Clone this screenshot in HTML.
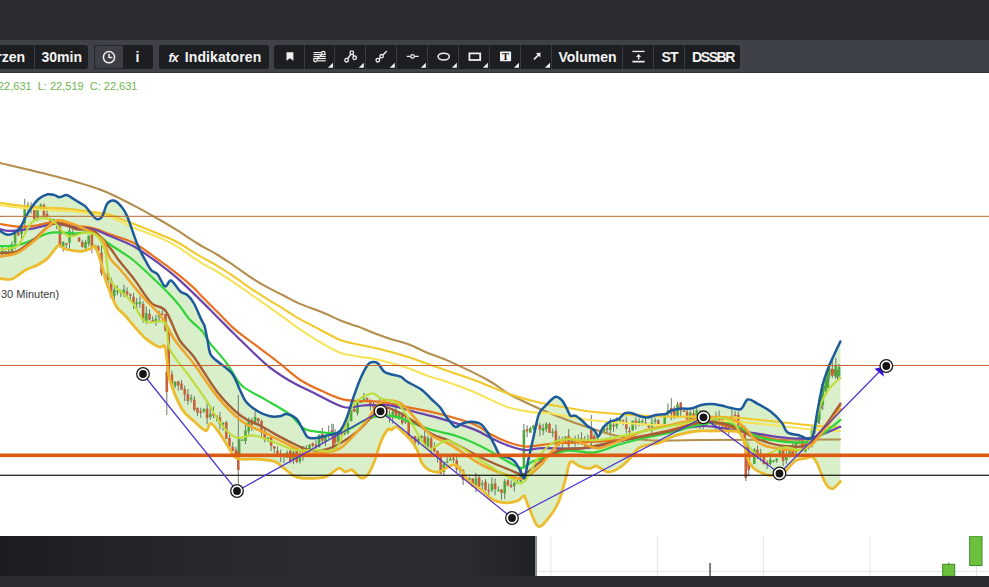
<!DOCTYPE html>
<html><head><meta charset="utf-8">
<style>
html,body{margin:0;padding:0;width:989px;height:587px;overflow:hidden;background:#fff;font-family:"Liberation Sans",sans-serif;}
#top{position:absolute;left:0;top:0;width:989px;height:40px;background:#2a2c31;}
#tb{position:absolute;left:0;top:40px;width:989px;height:32px;background:#3e4147;border-bottom:1px solid #303237;}
.g{position:absolute;top:45px;height:24px;background:#1c1e22;border-radius:3px;}
.b{position:absolute;top:45px;height:24px;color:#f4f4f4;font-weight:bold;font-size:14px;line-height:24.5px;white-space:nowrap;}
.sep{position:absolute;top:45px;width:1px;height:24px;background:#393b40;}
#chart{position:absolute;left:0;top:73px;width:989px;height:463px;background:#fff;overflow:hidden;}
#bot{position:absolute;left:0;top:536px;width:535px;height:40px;background:linear-gradient(90deg,#1c1d21 0%,#232529 25%,#2a2c31 55%,#2b2d32 85%,#1f2125 100%);}
#botline{position:absolute;left:535px;top:536px;width:1.5px;height:40px;background:#8a8a8a;}
#botr{position:absolute;left:536.5px;top:536px;width:453px;height:40px;background:#fff;}
#foot{position:absolute;left:0;top:575.7px;width:989px;height:12px;background:#2a2c31;}
</style></head><body>
<div id="top"></div>
<div id="tb"></div>
<div class="g" style="left:-4px;width:92px;"></div>
<div class="g" style="left:93.5px;width:59.5px;"></div>
<div style="position:absolute;left:93.5px;top:45px;width:28.5px;height:22px;background:#3c3f45;border:1px solid #25272b;border-right:none;border-radius:3px 0 0 3px;"></div>
<div class="g" style="left:158.5px;width:110px;"></div>
<div class="g" style="left:274.4px;width:465.6px;"></div>
<div class="sep" style="left:34px"></div>
<div class="sep" style="left:304px"></div>
<div class="sep" style="left:334.2px"></div>
<div class="sep" style="left:365px"></div>
<div class="sep" style="left:396px"></div>
<div class="sep" style="left:427px"></div>
<div class="sep" style="left:458px"></div>
<div class="sep" style="left:489px"></div>
<div class="sep" style="left:520px"></div>
<div class="sep" style="left:551px"></div>
<div class="sep" style="left:622px"></div>
<div class="sep" style="left:653.2px"></div>
<div class="sep" style="left:684px"></div>
<div class="b" style="left:-6px;width:31px;text-align:right;">rzen</div>
<div class="b" style="left:41.5px;">30min</div>
<div class="b" style="left:135.5px;">i</div>
<div class="b" style="left:184.8px;letter-spacing:0.1px;">Indikatoren</div>
<div class="b" style="left:558.5px;letter-spacing:0px;">Volumen</div>
<div class="b" style="left:661.5px;letter-spacing:-0.8px;">ST</div>
<div class="b" style="left:692px;letter-spacing:-1.4px;">DSSBR</div>
<svg style="position:absolute;left:0;top:0" width="989" height="74">
 <g fill="none" stroke="#eeeeee" stroke-width="1.5">
  <circle cx="109" cy="57.2" r="5.6"/>
  <path d="M109 53.8V57.6H112.4"/>
 </g>
 <text x="168.5" y="61.8" fill="#f4f4f4" font-family="Liberation Sans" font-style="italic" font-weight="bold" font-size="12.5" letter-spacing="-1">fx</text>
 <path d="M286.5 52.2H293.4V60.7L290 58.2L286.5 60.7Z" fill="#f0f0f0"/>
 <g stroke="#eeeeee" stroke-width="1.3" fill="none">
  </g><g fill="#eeeeee"><rect x="313.5" y="52" width="8" height="1.1"/><rect x="313.5" y="54" width="12.3" height="1.1"/><rect x="313.5" y="56" width="12.3" height="1.1"/><rect x="313.5" y="58" width="12.3" height="1.1"/><rect x="318" y="60.2" width="7.8" height="1.2"/></g><g stroke="#eeeeee" stroke-width="1.3" fill="none">
  <path d="M316.6 59.0L322.2 54.2" stroke-width="1.2"/>
  <circle cx="323.3" cy="53.1" r="1.7" fill="#1c1e22"/>
  <circle cx="315.5" cy="60.1" r="1.8" fill="#1c1e22"/>
  <path d="M347.4 59L351 54M352.6 54L354 56.3"/>
  <circle cx="346.6" cy="60.2" r="1.8" fill="#1c1e22"/>
  <circle cx="351.8" cy="52.7" r="1.8" fill="#1c1e22"/>
  <circle cx="354.7" cy="57.8" r="1.8" fill="#1c1e22"/>
  <path d="M378.8 59.2L380.3 57.6M383 55L386.8 51"/>
  <circle cx="381.6" cy="56.2" r="1.7" fill="#1c1e22"/>
  <circle cx="377.8" cy="60.2" r="1.8" fill="#1c1e22"/>
  <path d="M406.8 56.4H410.4M414.6 56.4H418.7"/>
  <circle cx="412.5" cy="56.4" r="1.8" fill="#1c1e22"/>
  <ellipse cx="443.7" cy="56.6" rx="5.6" ry="3.4" stroke-width="1.5"/>
  <rect x="469.4" y="53.4" width="10.8" height="6.6" stroke-width="1.8"/>
  <path d="M534 59.3L539.4 54" stroke-width="1.7"/>
 </g>
 <path d="M540.5 52.8L540.2 57.4L535.9 53.1Z" fill="#eeeeee"/>
 <rect x="500" y="51.6" width="11.1" height="9.6" rx="0.8" fill="#f2f2f2"/>
 <text x="505.6" y="60.2" fill="#111" font-family="Liberation Serif" font-weight="bold" font-size="10.5" text-anchor="middle">T</text>
 <g fill="#eeeeee">
  <rect x="632.4" y="50.8" width="12.2" height="1.3"/>
  <rect x="632.4" y="60.8" width="12.2" height="1.7"/>
  <rect x="637.9" y="56" width="1.4" height="3.5"/>
  <path d="M636 56.9L638.6 53.9L641.2 56.9Z"/>
 </g>
 <g fill="#f2f2f2">
  <path d="M333 62.7V67.8H327.9Z"/>
  <path d="M363.8 62.7V67.8H358.7Z"/>
  <path d="M394.8 62.7V67.8H389.7Z"/>
  <path d="M425.9 62.7V67.8H420.8Z"/>
  <path d="M456.9 62.7V67.8H451.8Z"/>
  <path d="M487.9 62.7V67.8H482.8Z"/>
  <path d="M519 62.7V67.8H513.9Z"/>
  <path d="M550 62.7V67.8H544.9Z"/>
 </g>
</svg>
<div id="chart"><svg width="989" height="463" viewBox="0 73 989 463" style="position:absolute;left:0;top:0">
<path d="M0.0 230.9 L6.8 234.6 L13.6 233.4 L20.4 227.5 L25.5 217.2 L32.4 206.2 L39.2 198.5 L47.7 194.3 L54.5 195.1 L59.6 197.2 L66.4 195.1 L71.5 197.7 L78.3 201.9 L85.1 206.2 L92.0 214.7 L97.0 219.3 L102.2 216.4 L107.3 203.6 L113.6 200.5 L120.5 205.6 L127.0 215.8 L137.5 244.8 L145.2 260.0 L151.3 270.2 L157.5 274.3 L165.1 286.4 L171.0 280.5 L180.4 291.5 L187.3 295.0 L194.0 303.5 L200.9 318.8 L204.5 326.0 L207.5 340.0 L210.5 354.3 L217.7 361.5 L232.0 373.4 L239.0 387.7 L246.3 402.0 L258.2 411.5 L270.0 416.3 L279.7 416.3 L286.8 414.0 L296.3 418.7 L303.5 430.6 L308.3 437.7 L317.8 437.7 L327.3 435.4 L339.2 431.8 L346.4 418.7 L353.5 397.2 L360.7 378.0 L368.0 364.5 L373.5 362.0 L378.0 363.5 L384.0 371.5 L390.0 374.0 L400.5 376.7 L407.3 381.8 L421.0 389.3 L432.3 400.0 L440.0 407.3 L446.8 417.5 L455.3 426.9 L462.2 423.5 L470.7 421.8 L481.0 424.3 L487.7 432.8 L494.5 444.8 L499.7 455.0 L508.2 457.6 L515.0 461.8 L520.1 470.3 L524.4 478.0 L528.6 458.4 L533.7 436.2 L538.9 414.1 L545.7 405.6 L555.1 397.0 L562.0 400.5 L567.0 409.0 L570.5 415.8 L575.6 415.8 L582.4 421.0 L587.5 426.0 L594.3 430.3 L598.6 436.2 L602.8 427.7 L609.7 421.8 L618.2 419.2 L625.0 413.2 L631.8 413.2 L638.6 415.8 L647.2 417.5 L655.7 415.0 L665.9 414.0 L670.7 410.7 L681.0 408.6 L691.0 408.6 L701.3 405.0 L711.6 404.0 L721.8 405.6 L730.0 407.7 L740.9 409.0 L747.7 399.5 L757.3 403.6 L770.9 411.8 L781.8 422.7 L787.3 432.3 L798.2 435.0 L811.8 437.7 L817.3 411.8 L822.7 384.5 L828.2 368.2 L833.6 355.9 L840.4 341.5 L840.4 481.4 L833.6 488.2 L828.2 486.8 L822.7 477.3 L817.3 463.6 L811.8 456.8 L806.4 458.2 L795.4 460.9 L784.5 471.8 L775.0 475.0 L765.5 474.5 L751.8 466.4 L746.3 453.6 L743.6 440.0 L738.2 432.0 L725.9 431.0 L711.6 431.0 L697.3 431.0 L681.0 434.2 L670.7 437.3 L659.0 443.0 L648.9 444.8 L638.6 448.2 L628.4 460.0 L618.2 468.6 L608.0 472.0 L601.0 468.6 L596.0 466.0 L589.2 468.6 L579.0 466.0 L570.5 461.8 L565.3 480.0 L558.6 501.8 L548.4 518.2 L538.2 526.3 L530.0 510.0 L525.9 499.8 L523.8 495.7 L517.7 500.8 L505.4 502.8 L493.0 499.8 L481.0 489.5 L468.6 481.3 L460.4 469.0 L452.3 465.0 L439.0 471.8 L428.9 470.1 L422.0 463.3 L417.0 449.7 L410.1 439.4 L403.3 432.6 L396.5 426.6 L391.4 430.0 L388.0 429.2 L381.1 441.1 L374.3 461.6 L367.5 475.2 L360.7 477.8 L352.2 470.1 L345.3 471.8 L338.5 468.4 L325.0 477.0 L303.5 478.3 L294.0 475.9 L284.4 468.7 L274.9 461.6 L258.2 459.2 L241.5 459.2 L234.4 456.8 L227.2 445.0 L217.7 430.6 L210.5 423.4 L205.8 430.6 L193.8 421.0 L182.0 409.0 L170.0 380.5 L166.7 358.2 L164.6 346.0 L159.5 347.0 L147.3 339.8 L137.0 329.5 L124.8 315.2 L116.6 307.0 L110.4 292.7 L105.6 280.2 L102.2 266.6 L97.9 253.0 L94.5 246.2 L90.2 248.7 L81.7 251.3 L71.5 250.4 L64.7 248.7 L58.7 245.3 L54.5 249.6 L47.7 258.1 L37.5 264.9 L25.5 270.0 L17.0 276.0 L10.2 279.4 L0.0 278.5 Z" fill="#d8efc9" stroke="none"/>
<rect x="1.8" y="245.6" width="1" height="11.8" fill="#6a7a6a"/>
<rect x="1.0" y="250.6" width="2.6" height="1.5" fill="#4fa83a"/>
<rect x="5.0" y="250.9" width="1" height="3.9" fill="#6a7a6a"/>
<rect x="4.2" y="250.9" width="2.6" height="1.5" fill="#4fa83a"/>
<rect x="8.2" y="245.5" width="1" height="7.2" fill="#6a7a6a"/>
<rect x="7.4" y="251.5" width="2.6" height="1.5" fill="#c8603a"/>
<rect x="11.4" y="241.4" width="1" height="13.2" fill="#6a7a6a"/>
<rect x="10.6" y="244.4" width="2.6" height="7.0" fill="#4fa83a"/>
<rect x="14.6" y="232.4" width="1" height="17.0" fill="#6a7a6a"/>
<rect x="13.8" y="233.6" width="2.6" height="9.6" fill="#4fa83a"/>
<rect x="17.8" y="227.2" width="1" height="8.6" fill="#6a7a6a"/>
<rect x="17.0" y="232.2" width="2.6" height="3.1" fill="#c8603a"/>
<rect x="21.0" y="224.5" width="1" height="15.1" fill="#6a7a6a"/>
<rect x="20.2" y="224.5" width="2.6" height="9.4" fill="#4fa83a"/>
<rect x="24.2" y="198.8" width="1" height="30.3" fill="#6a7a6a"/>
<rect x="23.4" y="205.6" width="2.6" height="17.7" fill="#4fa83a"/>
<rect x="27.4" y="201.7" width="1" height="9.8" fill="#6a7a6a"/>
<rect x="26.6" y="204.7" width="2.6" height="2.8" fill="#4fa83a"/>
<rect x="30.6" y="202.3" width="1" height="11.3" fill="#6a7a6a"/>
<rect x="29.8" y="206.4" width="2.6" height="1.5" fill="#c8603a"/>
<rect x="33.8" y="204.4" width="1" height="15.2" fill="#6a7a6a"/>
<rect x="33.0" y="206.1" width="2.6" height="13.0" fill="#c8603a"/>
<rect x="37.0" y="206.7" width="1" height="14.1" fill="#6a7a6a"/>
<rect x="36.2" y="208.0" width="2.6" height="9.4" fill="#4fa83a"/>
<rect x="40.2" y="203.3" width="1" height="6.7" fill="#6a7a6a"/>
<rect x="39.4" y="204.9" width="2.6" height="3.8" fill="#4fa83a"/>
<rect x="43.4" y="203.4" width="1" height="14.7" fill="#6a7a6a"/>
<rect x="42.6" y="204.8" width="2.6" height="10.8" fill="#c8603a"/>
<rect x="46.6" y="207.1" width="1" height="10.0" fill="#6a7a6a"/>
<rect x="45.8" y="213.9" width="2.6" height="3.2" fill="#c8603a"/>
<rect x="49.8" y="218.4" width="1" height="8.4" fill="#6a7a6a"/>
<rect x="49.0" y="218.5" width="2.6" height="3.4" fill="#c8603a"/>
<rect x="53.0" y="219.1" width="1" height="3.2" fill="#6a7a6a"/>
<rect x="52.2" y="219.1" width="2.6" height="3.1" fill="#4fa83a"/>
<rect x="56.2" y="220.2" width="1" height="8.9" fill="#6a7a6a"/>
<rect x="55.4" y="220.9" width="2.6" height="3.5" fill="#c8603a"/>
<rect x="59.4" y="224.6" width="1" height="23.1" fill="#6a7a6a"/>
<rect x="58.6" y="226.1" width="2.6" height="19.9" fill="#c8603a"/>
<rect x="62.6" y="241.4" width="1" height="10.4" fill="#6a7a6a"/>
<rect x="61.8" y="241.7" width="2.6" height="5.5" fill="#4fa83a"/>
<rect x="65.8" y="243.0" width="1" height="6.6" fill="#6a7a6a"/>
<rect x="65.0" y="243.1" width="2.6" height="1.5" fill="#c8603a"/>
<rect x="69.0" y="227.2" width="1" height="21.5" fill="#6a7a6a"/>
<rect x="68.2" y="230.7" width="2.6" height="11.8" fill="#4fa83a"/>
<rect x="72.2" y="229.5" width="1" height="7.0" fill="#6a7a6a"/>
<rect x="71.4" y="232.4" width="2.6" height="2.7" fill="#c8603a"/>
<rect x="75.4" y="233.6" width="1" height="2.5" fill="#6a7a6a"/>
<rect x="74.6" y="233.8" width="2.6" height="1.8" fill="#c8603a"/>
<rect x="78.6" y="237.1" width="1" height="4.7" fill="#6a7a6a"/>
<rect x="77.8" y="237.6" width="2.6" height="4.1" fill="#c8603a"/>
<rect x="81.8" y="239.9" width="1" height="7.8" fill="#6a7a6a"/>
<rect x="81.0" y="241.9" width="2.6" height="4.9" fill="#c8603a"/>
<rect x="85.0" y="239.8" width="1" height="10.3" fill="#6a7a6a"/>
<rect x="84.2" y="242.1" width="2.6" height="5.9" fill="#4fa83a"/>
<rect x="88.2" y="235.4" width="1" height="11.0" fill="#6a7a6a"/>
<rect x="87.4" y="235.5" width="2.6" height="8.3" fill="#4fa83a"/>
<rect x="91.4" y="229.5" width="1" height="23.7" fill="#6a7a6a"/>
<rect x="90.6" y="234.0" width="2.6" height="12.7" fill="#c8603a"/>
<rect x="94.6" y="244.7" width="1" height="5.3" fill="#6a7a6a"/>
<rect x="93.8" y="245.0" width="2.6" height="2.9" fill="#4fa83a"/>
<rect x="97.8" y="245.1" width="1" height="8.2" fill="#6a7a6a"/>
<rect x="97.0" y="246.4" width="2.6" height="4.7" fill="#c8603a"/>
<rect x="101.0" y="245.8" width="1" height="29.9" fill="#6a7a6a"/>
<rect x="100.2" y="252.5" width="2.6" height="20.9" fill="#c8603a"/>
<rect x="104.2" y="271.8" width="1" height="4.0" fill="#6a7a6a"/>
<rect x="103.4" y="274.3" width="2.6" height="1.5" fill="#c8603a"/>
<rect x="107.4" y="271.4" width="1" height="15.3" fill="#6a7a6a"/>
<rect x="106.6" y="273.2" width="2.6" height="6.7" fill="#c8603a"/>
<rect x="110.6" y="277.7" width="1" height="20.4" fill="#6a7a6a"/>
<rect x="109.8" y="280.4" width="2.6" height="16.3" fill="#c8603a"/>
<rect x="113.8" y="284.8" width="1" height="16.6" fill="#6a7a6a"/>
<rect x="113.0" y="289.7" width="2.6" height="6.0" fill="#4fa83a"/>
<rect x="117.0" y="285.5" width="1" height="9.6" fill="#6a7a6a"/>
<rect x="116.2" y="290.4" width="2.6" height="1.5" fill="#4fa83a"/>
<rect x="120.2" y="289.7" width="1" height="7.4" fill="#6a7a6a"/>
<rect x="119.4" y="291.4" width="2.6" height="1.5" fill="#c8603a"/>
<rect x="123.4" y="284.6" width="1" height="12.4" fill="#6a7a6a"/>
<rect x="122.6" y="289.4" width="2.6" height="3.4" fill="#4fa83a"/>
<rect x="126.6" y="287.4" width="1" height="10.1" fill="#6a7a6a"/>
<rect x="125.8" y="291.2" width="2.6" height="3.1" fill="#c8603a"/>
<rect x="129.8" y="293.4" width="1" height="6.0" fill="#6a7a6a"/>
<rect x="129.0" y="294.4" width="2.6" height="1.5" fill="#c8603a"/>
<rect x="133.0" y="292.9" width="1" height="15.8" fill="#6a7a6a"/>
<rect x="132.2" y="296.7" width="2.6" height="7.0" fill="#c8603a"/>
<rect x="136.2" y="297.9" width="1" height="11.7" fill="#6a7a6a"/>
<rect x="135.4" y="302.5" width="2.6" height="1.8" fill="#4fa83a"/>
<rect x="139.4" y="296.5" width="1" height="11.5" fill="#6a7a6a"/>
<rect x="138.6" y="302.2" width="2.6" height="1.7" fill="#4fa83a"/>
<rect x="142.6" y="301.2" width="1" height="21.5" fill="#6a7a6a"/>
<rect x="141.8" y="304.0" width="2.6" height="15.9" fill="#c8603a"/>
<rect x="145.8" y="306.7" width="1" height="17.1" fill="#6a7a6a"/>
<rect x="145.0" y="313.0" width="2.6" height="8.2" fill="#4fa83a"/>
<rect x="149.0" y="309.4" width="1" height="10.9" fill="#6a7a6a"/>
<rect x="148.2" y="313.9" width="2.6" height="5.8" fill="#c8603a"/>
<rect x="152.2" y="316.1" width="1" height="6.3" fill="#6a7a6a"/>
<rect x="151.4" y="320.1" width="2.6" height="1.5" fill="#c8603a"/>
<rect x="155.4" y="314.9" width="1" height="10.9" fill="#6a7a6a"/>
<rect x="154.6" y="318.6" width="2.6" height="2.8" fill="#4fa83a"/>
<rect x="158.6" y="310.6" width="1" height="10.5" fill="#6a7a6a"/>
<rect x="157.8" y="312.8" width="2.6" height="4.4" fill="#4fa83a"/>
<rect x="161.8" y="309.9" width="1" height="5.2" fill="#6a7a6a"/>
<rect x="161.0" y="313.6" width="2.6" height="1.5" fill="#c8603a"/>
<rect x="165.0" y="313.9" width="1" height="17.5" fill="#6a7a6a"/>
<rect x="164.2" y="314.0" width="2.6" height="16.9" fill="#c8603a"/>
<rect x="168.2" y="328.9" width="1" height="45.8" fill="#6a7a6a"/>
<rect x="167.4" y="329.6" width="2.6" height="45.1" fill="#c8603a"/>
<rect x="171.4" y="370.7" width="1" height="17.1" fill="#6a7a6a"/>
<rect x="170.6" y="374.2" width="2.6" height="10.3" fill="#c8603a"/>
<rect x="174.6" y="381.6" width="1" height="6.5" fill="#6a7a6a"/>
<rect x="173.8" y="381.6" width="2.6" height="4.5" fill="#4fa83a"/>
<rect x="177.8" y="380.9" width="1" height="9.8" fill="#6a7a6a"/>
<rect x="177.0" y="381.3" width="2.6" height="4.1" fill="#c8603a"/>
<rect x="181.0" y="380.0" width="1" height="9.8" fill="#6a7a6a"/>
<rect x="180.2" y="383.5" width="2.6" height="6.1" fill="#c8603a"/>
<rect x="184.2" y="385.7" width="1" height="15.4" fill="#6a7a6a"/>
<rect x="183.4" y="389.0" width="2.6" height="5.6" fill="#c8603a"/>
<rect x="187.4" y="389.0" width="1" height="15.7" fill="#6a7a6a"/>
<rect x="186.6" y="394.2" width="2.6" height="6.7" fill="#c8603a"/>
<rect x="190.6" y="394.4" width="1" height="8.3" fill="#6a7a6a"/>
<rect x="189.8" y="397.7" width="2.6" height="1.8" fill="#4fa83a"/>
<rect x="193.8" y="396.1" width="1" height="15.3" fill="#6a7a6a"/>
<rect x="193.0" y="399.6" width="2.6" height="10.2" fill="#c8603a"/>
<rect x="197.0" y="407.5" width="1" height="8.4" fill="#6a7a6a"/>
<rect x="196.2" y="407.8" width="2.6" height="4.9" fill="#c8603a"/>
<rect x="200.2" y="407.7" width="1" height="10.1" fill="#6a7a6a"/>
<rect x="199.4" y="411.3" width="2.6" height="1.5" fill="#c8603a"/>
<rect x="203.4" y="408.2" width="1" height="4.5" fill="#6a7a6a"/>
<rect x="202.6" y="409.1" width="2.6" height="2.4" fill="#4fa83a"/>
<rect x="206.6" y="402.0" width="1" height="22.2" fill="#6a7a6a"/>
<rect x="205.8" y="408.6" width="2.6" height="9.5" fill="#c8603a"/>
<rect x="209.8" y="407.2" width="1" height="12.5" fill="#6a7a6a"/>
<rect x="209.0" y="414.0" width="2.6" height="3.1" fill="#4fa83a"/>
<rect x="213.0" y="406.5" width="1" height="11.7" fill="#6a7a6a"/>
<rect x="212.2" y="413.3" width="2.6" height="2.4" fill="#c8603a"/>
<rect x="216.2" y="415.2" width="1" height="6.4" fill="#6a7a6a"/>
<rect x="215.4" y="415.5" width="2.6" height="2.4" fill="#c8603a"/>
<rect x="219.4" y="412.2" width="1" height="17.5" fill="#6a7a6a"/>
<rect x="218.6" y="417.2" width="2.6" height="7.2" fill="#c8603a"/>
<rect x="222.6" y="422.0" width="1" height="8.8" fill="#6a7a6a"/>
<rect x="221.8" y="423.1" width="2.6" height="1.5" fill="#4fa83a"/>
<rect x="225.8" y="421.0" width="1" height="18.2" fill="#6a7a6a"/>
<rect x="225.0" y="422.1" width="2.6" height="16.6" fill="#c8603a"/>
<rect x="229.0" y="434.4" width="1" height="14.4" fill="#6a7a6a"/>
<rect x="228.2" y="437.9" width="2.6" height="8.5" fill="#c8603a"/>
<rect x="232.2" y="442.2" width="1" height="8.9" fill="#6a7a6a"/>
<rect x="231.4" y="446.8" width="2.6" height="3.9" fill="#c8603a"/>
<rect x="235.4" y="447.0" width="1" height="9.8" fill="#6a7a6a"/>
<rect x="234.6" y="449.9" width="2.6" height="5.4" fill="#c8603a"/>
<rect x="238.6" y="436.9" width="1" height="20.3" fill="#6a7a6a"/>
<rect x="237.8" y="439.3" width="2.6" height="16.2" fill="#4fa83a"/>
<rect x="241.8" y="439.4" width="1" height="1.3" fill="#6a7a6a"/>
<rect x="241.0" y="439.4" width="2.6" height="1.5" fill="#4fa83a"/>
<rect x="245.0" y="424.5" width="1" height="19.6" fill="#6a7a6a"/>
<rect x="244.2" y="430.4" width="2.6" height="10.7" fill="#4fa83a"/>
<rect x="248.2" y="417.6" width="1" height="17.1" fill="#6a7a6a"/>
<rect x="247.4" y="419.7" width="2.6" height="11.8" fill="#4fa83a"/>
<rect x="251.4" y="417.8" width="1" height="13.3" fill="#6a7a6a"/>
<rect x="250.6" y="420.3" width="2.6" height="4.7" fill="#c8603a"/>
<rect x="254.6" y="411.3" width="1" height="13.9" fill="#6a7a6a"/>
<rect x="253.8" y="416.9" width="2.6" height="7.6" fill="#4fa83a"/>
<rect x="257.8" y="418.1" width="1" height="8.5" fill="#6a7a6a"/>
<rect x="257.0" y="418.2" width="2.6" height="2.9" fill="#c8603a"/>
<rect x="261.0" y="419.7" width="1" height="17.5" fill="#6a7a6a"/>
<rect x="260.2" y="420.9" width="2.6" height="11.3" fill="#c8603a"/>
<rect x="264.2" y="428.3" width="1" height="14.1" fill="#6a7a6a"/>
<rect x="263.4" y="430.8" width="2.6" height="8.6" fill="#c8603a"/>
<rect x="267.4" y="437.1" width="1" height="4.9" fill="#6a7a6a"/>
<rect x="266.6" y="437.6" width="2.6" height="1.5" fill="#4fa83a"/>
<rect x="270.6" y="435.0" width="1" height="16.0" fill="#6a7a6a"/>
<rect x="269.8" y="435.9" width="2.6" height="9.8" fill="#c8603a"/>
<rect x="273.8" y="446.3" width="1" height="6.7" fill="#6a7a6a"/>
<rect x="273.0" y="446.3" width="2.6" height="2.3" fill="#c8603a"/>
<rect x="277.0" y="446.3" width="1" height="8.2" fill="#6a7a6a"/>
<rect x="276.2" y="450.6" width="2.6" height="3.8" fill="#c8603a"/>
<rect x="280.2" y="449.5" width="1" height="12.7" fill="#6a7a6a"/>
<rect x="279.4" y="453.3" width="2.6" height="2.4" fill="#c8603a"/>
<rect x="283.4" y="453.0" width="1" height="10.3" fill="#6a7a6a"/>
<rect x="282.6" y="454.2" width="2.6" height="2.8" fill="#c8603a"/>
<rect x="286.6" y="450.4" width="1" height="7.7" fill="#6a7a6a"/>
<rect x="285.8" y="452.4" width="2.6" height="5.1" fill="#4fa83a"/>
<rect x="289.8" y="450.3" width="1" height="13.0" fill="#6a7a6a"/>
<rect x="289.0" y="450.6" width="2.6" height="10.9" fill="#c8603a"/>
<rect x="293.0" y="448.9" width="1" height="15.3" fill="#6a7a6a"/>
<rect x="292.2" y="452.2" width="2.6" height="7.5" fill="#4fa83a"/>
<rect x="296.2" y="448.5" width="1" height="14.7" fill="#6a7a6a"/>
<rect x="295.4" y="450.7" width="2.6" height="11.2" fill="#c8603a"/>
<rect x="299.4" y="450.0" width="1" height="13.6" fill="#6a7a6a"/>
<rect x="298.6" y="456.3" width="2.6" height="5.5" fill="#4fa83a"/>
<rect x="302.6" y="446.0" width="1" height="14.8" fill="#6a7a6a"/>
<rect x="301.8" y="446.5" width="2.6" height="10.7" fill="#4fa83a"/>
<rect x="305.8" y="445.1" width="1" height="9.0" fill="#6a7a6a"/>
<rect x="305.0" y="448.1" width="2.6" height="2.4" fill="#c8603a"/>
<rect x="309.0" y="443.9" width="1" height="11.5" fill="#6a7a6a"/>
<rect x="308.2" y="444.9" width="2.6" height="5.8" fill="#4fa83a"/>
<rect x="312.2" y="442.5" width="1" height="5.1" fill="#6a7a6a"/>
<rect x="311.4" y="443.4" width="2.6" height="2.5" fill="#c8603a"/>
<rect x="315.4" y="440.3" width="1" height="10.0" fill="#6a7a6a"/>
<rect x="314.6" y="444.6" width="2.6" height="1.8" fill="#c8603a"/>
<rect x="318.6" y="434.5" width="1" height="13.0" fill="#6a7a6a"/>
<rect x="317.8" y="434.8" width="2.6" height="12.4" fill="#4fa83a"/>
<rect x="321.8" y="427.9" width="1" height="15.4" fill="#6a7a6a"/>
<rect x="321.0" y="433.7" width="2.6" height="7.1" fill="#c8603a"/>
<rect x="325.0" y="436.3" width="1" height="10.1" fill="#6a7a6a"/>
<rect x="324.2" y="436.4" width="2.6" height="5.6" fill="#4fa83a"/>
<rect x="328.2" y="425.5" width="1" height="13.6" fill="#6a7a6a"/>
<rect x="327.4" y="432.0" width="2.6" height="3.0" fill="#4fa83a"/>
<rect x="331.4" y="423.7" width="1" height="14.3" fill="#6a7a6a"/>
<rect x="330.6" y="430.4" width="2.6" height="3.7" fill="#c8603a"/>
<rect x="334.6" y="429.1" width="1" height="15.0" fill="#6a7a6a"/>
<rect x="333.8" y="432.7" width="2.6" height="9.8" fill="#c8603a"/>
<rect x="337.8" y="430.8" width="1" height="12.6" fill="#6a7a6a"/>
<rect x="337.0" y="434.3" width="2.6" height="7.5" fill="#4fa83a"/>
<rect x="341.0" y="427.5" width="1" height="9.3" fill="#6a7a6a"/>
<rect x="340.2" y="432.8" width="2.6" height="1.5" fill="#c8603a"/>
<rect x="344.2" y="426.9" width="1" height="8.6" fill="#6a7a6a"/>
<rect x="343.4" y="432.5" width="2.6" height="1.5" fill="#4fa83a"/>
<rect x="347.4" y="418.5" width="1" height="16.1" fill="#6a7a6a"/>
<rect x="346.6" y="423.1" width="2.6" height="9.7" fill="#4fa83a"/>
<rect x="350.6" y="408.2" width="1" height="13.1" fill="#6a7a6a"/>
<rect x="349.8" y="409.0" width="2.6" height="12.3" fill="#4fa83a"/>
<rect x="353.8" y="404.2" width="1" height="7.6" fill="#6a7a6a"/>
<rect x="353.0" y="408.9" width="2.6" height="2.8" fill="#c8603a"/>
<rect x="357.0" y="399.7" width="1" height="15.8" fill="#6a7a6a"/>
<rect x="356.2" y="403.2" width="2.6" height="10.1" fill="#4fa83a"/>
<rect x="360.2" y="401.1" width="1" height="1.1" fill="#6a7a6a"/>
<rect x="359.4" y="401.6" width="2.6" height="1.5" fill="#4fa83a"/>
<rect x="363.4" y="392.9" width="1" height="8.7" fill="#6a7a6a"/>
<rect x="362.6" y="398.7" width="2.6" height="2.4" fill="#4fa83a"/>
<rect x="366.6" y="397.3" width="1" height="3.8" fill="#6a7a6a"/>
<rect x="365.8" y="397.8" width="2.6" height="2.0" fill="#c8603a"/>
<rect x="369.8" y="399.7" width="1" height="10.7" fill="#6a7a6a"/>
<rect x="369.0" y="399.8" width="2.6" height="4.4" fill="#c8603a"/>
<rect x="373.0" y="401.8" width="1" height="9.3" fill="#6a7a6a"/>
<rect x="372.2" y="405.9" width="2.6" height="1.5" fill="#c8603a"/>
<rect x="376.2" y="406.2" width="1" height="6.7" fill="#6a7a6a"/>
<rect x="375.4" y="406.5" width="2.6" height="2.3" fill="#4fa83a"/>
<rect x="379.4" y="397.8" width="1" height="10.0" fill="#6a7a6a"/>
<rect x="378.6" y="402.3" width="2.6" height="5.0" fill="#4fa83a"/>
<rect x="382.6" y="399.5" width="1" height="7.7" fill="#6a7a6a"/>
<rect x="381.8" y="400.4" width="2.6" height="6.6" fill="#c8603a"/>
<rect x="385.8" y="407.2" width="1" height="10.0" fill="#6a7a6a"/>
<rect x="385.0" y="408.9" width="2.6" height="6.9" fill="#c8603a"/>
<rect x="389.0" y="410.4" width="1" height="12.3" fill="#6a7a6a"/>
<rect x="388.2" y="414.9" width="2.6" height="3.4" fill="#c8603a"/>
<rect x="392.2" y="407.8" width="1" height="15.9" fill="#6a7a6a"/>
<rect x="391.4" y="411.8" width="2.6" height="5.5" fill="#4fa83a"/>
<rect x="395.4" y="404.8" width="1" height="13.4" fill="#6a7a6a"/>
<rect x="394.6" y="411.5" width="2.6" height="6.6" fill="#c8603a"/>
<rect x="398.6" y="411.2" width="1" height="8.2" fill="#6a7a6a"/>
<rect x="397.8" y="413.2" width="2.6" height="6.1" fill="#4fa83a"/>
<rect x="401.8" y="412.3" width="1" height="12.4" fill="#6a7a6a"/>
<rect x="401.0" y="415.1" width="2.6" height="8.1" fill="#c8603a"/>
<rect x="405.0" y="414.7" width="1" height="9.3" fill="#6a7a6a"/>
<rect x="404.2" y="420.7" width="2.6" height="1.5" fill="#4fa83a"/>
<rect x="408.2" y="418.0" width="1" height="21.0" fill="#6a7a6a"/>
<rect x="407.4" y="418.9" width="2.6" height="20.0" fill="#c8603a"/>
<rect x="411.4" y="436.1" width="1" height="3.6" fill="#6a7a6a"/>
<rect x="410.6" y="437.1" width="2.6" height="1.5" fill="#c8603a"/>
<rect x="414.6" y="435.9" width="1" height="12.9" fill="#6a7a6a"/>
<rect x="413.8" y="436.0" width="2.6" height="6.2" fill="#c8603a"/>
<rect x="417.8" y="436.8" width="1" height="8.2" fill="#6a7a6a"/>
<rect x="417.0" y="438.8" width="2.6" height="3.4" fill="#4fa83a"/>
<rect x="421.0" y="435.5" width="1" height="5.4" fill="#6a7a6a"/>
<rect x="420.2" y="435.8" width="2.6" height="2.2" fill="#4fa83a"/>
<rect x="424.2" y="430.6" width="1" height="16.1" fill="#6a7a6a"/>
<rect x="423.4" y="436.2" width="2.6" height="9.7" fill="#c8603a"/>
<rect x="427.4" y="435.4" width="1" height="13.9" fill="#6a7a6a"/>
<rect x="426.6" y="437.9" width="2.6" height="8.2" fill="#4fa83a"/>
<rect x="430.6" y="433.9" width="1" height="19.9" fill="#6a7a6a"/>
<rect x="429.8" y="438.4" width="2.6" height="9.3" fill="#c8603a"/>
<rect x="433.8" y="442.2" width="1" height="10.2" fill="#6a7a6a"/>
<rect x="433.0" y="447.5" width="2.6" height="4.0" fill="#c8603a"/>
<rect x="437.0" y="450.6" width="1" height="12.0" fill="#6a7a6a"/>
<rect x="436.2" y="450.8" width="2.6" height="6.9" fill="#c8603a"/>
<rect x="440.2" y="456.6" width="1" height="17.5" fill="#6a7a6a"/>
<rect x="439.4" y="457.0" width="2.6" height="16.9" fill="#c8603a"/>
<rect x="443.4" y="461.6" width="1" height="13.9" fill="#6a7a6a"/>
<rect x="442.6" y="463.7" width="2.6" height="8.5" fill="#4fa83a"/>
<rect x="446.6" y="457.3" width="1" height="4.7" fill="#6a7a6a"/>
<rect x="445.8" y="461.6" width="2.6" height="1.5" fill="#4fa83a"/>
<rect x="449.8" y="457.0" width="1" height="3.9" fill="#6a7a6a"/>
<rect x="449.0" y="458.8" width="2.6" height="1.9" fill="#4fa83a"/>
<rect x="453.0" y="453.4" width="1" height="9.4" fill="#6a7a6a"/>
<rect x="452.2" y="458.1" width="2.6" height="1.7" fill="#c8603a"/>
<rect x="456.2" y="455.6" width="1" height="16.9" fill="#6a7a6a"/>
<rect x="455.4" y="460.4" width="2.6" height="9.0" fill="#c8603a"/>
<rect x="459.4" y="465.5" width="1" height="11.6" fill="#6a7a6a"/>
<rect x="458.6" y="469.4" width="2.6" height="1.5" fill="#4fa83a"/>
<rect x="462.6" y="469.1" width="1" height="15.9" fill="#6a7a6a"/>
<rect x="461.8" y="470.2" width="2.6" height="9.6" fill="#c8603a"/>
<rect x="465.8" y="478.2" width="1" height="1.3" fill="#6a7a6a"/>
<rect x="465.0" y="478.3" width="2.6" height="1.5" fill="#c8603a"/>
<rect x="469.0" y="477.0" width="1" height="2.7" fill="#6a7a6a"/>
<rect x="468.2" y="478.2" width="2.6" height="1.5" fill="#4fa83a"/>
<rect x="472.2" y="478.4" width="1" height="8.0" fill="#6a7a6a"/>
<rect x="471.4" y="478.5" width="2.6" height="7.9" fill="#c8603a"/>
<rect x="475.4" y="472.9" width="1" height="19.3" fill="#6a7a6a"/>
<rect x="474.6" y="478.5" width="2.6" height="7.2" fill="#4fa83a"/>
<rect x="478.6" y="475.3" width="1" height="12.7" fill="#6a7a6a"/>
<rect x="477.8" y="477.4" width="2.6" height="8.9" fill="#c8603a"/>
<rect x="481.8" y="480.2" width="1" height="9.5" fill="#6a7a6a"/>
<rect x="481.0" y="483.5" width="2.6" height="1.5" fill="#4fa83a"/>
<rect x="485.0" y="479.0" width="1" height="11.7" fill="#6a7a6a"/>
<rect x="484.2" y="481.8" width="2.6" height="8.2" fill="#c8603a"/>
<rect x="488.2" y="483.5" width="1" height="12.5" fill="#6a7a6a"/>
<rect x="487.4" y="489.9" width="2.6" height="1.5" fill="#c8603a"/>
<rect x="491.4" y="477.5" width="1" height="15.0" fill="#6a7a6a"/>
<rect x="490.6" y="483.7" width="2.6" height="6.5" fill="#4fa83a"/>
<rect x="494.6" y="478.6" width="1" height="16.7" fill="#6a7a6a"/>
<rect x="493.8" y="483.5" width="2.6" height="5.6" fill="#c8603a"/>
<rect x="497.8" y="486.4" width="1" height="4.8" fill="#6a7a6a"/>
<rect x="497.0" y="489.8" width="2.6" height="1.5" fill="#4fa83a"/>
<rect x="501.0" y="489.3" width="1" height="10.5" fill="#6a7a6a"/>
<rect x="500.2" y="489.4" width="2.6" height="3.6" fill="#c8603a"/>
<rect x="504.2" y="479.0" width="1" height="20.2" fill="#6a7a6a"/>
<rect x="503.4" y="481.5" width="2.6" height="11.9" fill="#4fa83a"/>
<rect x="507.4" y="479.2" width="1" height="7.1" fill="#6a7a6a"/>
<rect x="506.6" y="480.3" width="2.6" height="5.2" fill="#c8603a"/>
<rect x="510.6" y="480.3" width="1" height="7.6" fill="#6a7a6a"/>
<rect x="509.8" y="485.0" width="2.6" height="2.0" fill="#c8603a"/>
<rect x="513.8" y="476.3" width="1" height="15.2" fill="#6a7a6a"/>
<rect x="513.0" y="483.1" width="2.6" height="2.9" fill="#4fa83a"/>
<rect x="517.0" y="479.9" width="1" height="4.1" fill="#6a7a6a"/>
<rect x="516.2" y="481.8" width="2.6" height="1.7" fill="#4fa83a"/>
<rect x="520.2" y="467.0" width="1" height="15.3" fill="#6a7a6a"/>
<rect x="519.4" y="467.1" width="2.6" height="14.7" fill="#4fa83a"/>
<rect x="523.4" y="423.9" width="1" height="44.8" fill="#6a7a6a"/>
<rect x="522.6" y="429.9" width="2.6" height="38.0" fill="#4fa83a"/>
<rect x="526.6" y="425.2" width="1" height="12.0" fill="#6a7a6a"/>
<rect x="525.8" y="429.2" width="2.6" height="2.2" fill="#c8603a"/>
<rect x="529.8" y="426.3" width="1" height="6.4" fill="#6a7a6a"/>
<rect x="529.0" y="428.1" width="2.6" height="4.6" fill="#4fa83a"/>
<rect x="533.0" y="424.9" width="1" height="5.4" fill="#6a7a6a"/>
<rect x="532.2" y="425.6" width="2.6" height="2.9" fill="#4fa83a"/>
<rect x="536.2" y="422.3" width="1" height="3.9" fill="#6a7a6a"/>
<rect x="535.4" y="423.7" width="2.6" height="1.5" fill="#c8603a"/>
<rect x="539.4" y="423.2" width="1" height="13.0" fill="#6a7a6a"/>
<rect x="538.6" y="425.2" width="2.6" height="4.3" fill="#c8603a"/>
<rect x="542.6" y="423.7" width="1" height="11.5" fill="#6a7a6a"/>
<rect x="541.8" y="427.8" width="2.6" height="3.3" fill="#4fa83a"/>
<rect x="545.8" y="422.1" width="1" height="10.2" fill="#6a7a6a"/>
<rect x="545.0" y="423.8" width="2.6" height="5.2" fill="#4fa83a"/>
<rect x="549.0" y="422.7" width="1" height="10.3" fill="#6a7a6a"/>
<rect x="548.2" y="423.9" width="2.6" height="8.9" fill="#c8603a"/>
<rect x="552.2" y="428.4" width="1" height="8.7" fill="#6a7a6a"/>
<rect x="551.4" y="431.6" width="2.6" height="1.5" fill="#4fa83a"/>
<rect x="555.4" y="424.5" width="1" height="20.5" fill="#6a7a6a"/>
<rect x="554.6" y="430.8" width="2.6" height="13.1" fill="#c8603a"/>
<rect x="558.6" y="436.0" width="1" height="10.1" fill="#6a7a6a"/>
<rect x="557.8" y="440.7" width="2.6" height="1.5" fill="#4fa83a"/>
<rect x="561.8" y="436.8" width="1" height="11.0" fill="#6a7a6a"/>
<rect x="561.0" y="440.9" width="2.6" height="1.5" fill="#4fa83a"/>
<rect x="565.0" y="436.0" width="1" height="8.1" fill="#6a7a6a"/>
<rect x="564.2" y="436.7" width="2.6" height="4.6" fill="#4fa83a"/>
<rect x="568.2" y="429.0" width="1" height="19.3" fill="#6a7a6a"/>
<rect x="567.4" y="435.7" width="2.6" height="9.6" fill="#c8603a"/>
<rect x="571.4" y="438.2" width="1" height="5.8" fill="#6a7a6a"/>
<rect x="570.6" y="440.1" width="2.6" height="3.3" fill="#4fa83a"/>
<rect x="574.6" y="435.6" width="1" height="11.0" fill="#6a7a6a"/>
<rect x="573.8" y="441.7" width="2.6" height="1.5" fill="#c8603a"/>
<rect x="577.8" y="434.6" width="1" height="10.0" fill="#6a7a6a"/>
<rect x="577.0" y="438.7" width="2.6" height="2.8" fill="#4fa83a"/>
<rect x="581.0" y="432.3" width="1" height="12.3" fill="#6a7a6a"/>
<rect x="580.2" y="438.2" width="2.6" height="5.7" fill="#c8603a"/>
<rect x="584.2" y="436.1" width="1" height="12.8" fill="#6a7a6a"/>
<rect x="583.4" y="439.7" width="2.6" height="3.2" fill="#4fa83a"/>
<rect x="587.4" y="434.6" width="1" height="6.5" fill="#6a7a6a"/>
<rect x="586.6" y="439.4" width="2.6" height="1.5" fill="#4fa83a"/>
<rect x="590.6" y="430.9" width="1" height="14.6" fill="#6a7a6a"/>
<rect x="589.8" y="436.3" width="2.6" height="3.4" fill="#4fa83a"/>
<rect x="593.8" y="433.8" width="1" height="8.2" fill="#6a7a6a"/>
<rect x="593.0" y="435.9" width="2.6" height="3.2" fill="#c8603a"/>
<rect x="597.0" y="434.1" width="1" height="7.8" fill="#6a7a6a"/>
<rect x="596.2" y="435.3" width="2.6" height="3.1" fill="#4fa83a"/>
<rect x="600.2" y="431.9" width="1" height="2.4" fill="#6a7a6a"/>
<rect x="599.4" y="432.0" width="2.6" height="2.0" fill="#4fa83a"/>
<rect x="603.4" y="427.3" width="1" height="5.8" fill="#6a7a6a"/>
<rect x="602.6" y="427.9" width="2.6" height="4.5" fill="#4fa83a"/>
<rect x="606.6" y="424.4" width="1" height="10.1" fill="#6a7a6a"/>
<rect x="605.8" y="428.5" width="2.6" height="1.5" fill="#c8603a"/>
<rect x="609.8" y="418.2" width="1" height="18.3" fill="#6a7a6a"/>
<rect x="609.0" y="423.6" width="2.6" height="6.3" fill="#4fa83a"/>
<rect x="613.0" y="421.2" width="1" height="10.6" fill="#6a7a6a"/>
<rect x="612.2" y="425.0" width="2.6" height="1.5" fill="#c8603a"/>
<rect x="616.2" y="417.3" width="1" height="11.6" fill="#6a7a6a"/>
<rect x="615.4" y="422.8" width="2.6" height="3.6" fill="#4fa83a"/>
<rect x="619.4" y="418.9" width="1" height="2.9" fill="#6a7a6a"/>
<rect x="618.6" y="419.4" width="2.6" height="2.1" fill="#4fa83a"/>
<rect x="622.6" y="419.6" width="1" height="5.6" fill="#6a7a6a"/>
<rect x="621.8" y="419.9" width="2.6" height="1.5" fill="#c8603a"/>
<rect x="625.8" y="416.6" width="1" height="16.7" fill="#6a7a6a"/>
<rect x="625.0" y="421.7" width="2.6" height="7.2" fill="#c8603a"/>
<rect x="629.0" y="427.2" width="1" height="11.4" fill="#6a7a6a"/>
<rect x="628.2" y="430.8" width="2.6" height="1.5" fill="#c8603a"/>
<rect x="632.2" y="420.6" width="1" height="10.5" fill="#6a7a6a"/>
<rect x="631.4" y="420.7" width="2.6" height="9.6" fill="#4fa83a"/>
<rect x="635.4" y="416.5" width="1" height="12.9" fill="#6a7a6a"/>
<rect x="634.6" y="420.6" width="2.6" height="4.3" fill="#c8603a"/>
<rect x="638.6" y="418.1" width="1" height="8.1" fill="#6a7a6a"/>
<rect x="637.8" y="421.1" width="2.6" height="3.4" fill="#4fa83a"/>
<rect x="641.8" y="419.0" width="1" height="6.6" fill="#6a7a6a"/>
<rect x="641.0" y="420.8" width="2.6" height="1.5" fill="#4fa83a"/>
<rect x="645.0" y="416.2" width="1" height="8.9" fill="#6a7a6a"/>
<rect x="644.2" y="422.6" width="2.6" height="2.3" fill="#c8603a"/>
<rect x="648.2" y="424.6" width="1" height="3.3" fill="#6a7a6a"/>
<rect x="647.4" y="425.8" width="2.6" height="1.7" fill="#c8603a"/>
<rect x="651.4" y="417.9" width="1" height="15.2" fill="#6a7a6a"/>
<rect x="650.6" y="422.5" width="2.6" height="4.5" fill="#4fa83a"/>
<rect x="654.6" y="417.4" width="1" height="8.5" fill="#6a7a6a"/>
<rect x="653.8" y="420.0" width="2.6" height="1.6" fill="#4fa83a"/>
<rect x="657.8" y="419.0" width="1" height="7.1" fill="#6a7a6a"/>
<rect x="657.0" y="420.3" width="2.6" height="4.3" fill="#c8603a"/>
<rect x="661.0" y="423.9" width="1" height="2.8" fill="#6a7a6a"/>
<rect x="660.2" y="424.0" width="2.6" height="1.5" fill="#4fa83a"/>
<rect x="664.2" y="413.7" width="1" height="12.1" fill="#6a7a6a"/>
<rect x="663.4" y="413.9" width="2.6" height="10.8" fill="#4fa83a"/>
<rect x="667.4" y="403.5" width="1" height="13.3" fill="#6a7a6a"/>
<rect x="666.6" y="410.3" width="2.6" height="3.5" fill="#4fa83a"/>
<rect x="670.6" y="411.8" width="1" height="2.6" fill="#6a7a6a"/>
<rect x="669.8" y="412.0" width="2.6" height="1.5" fill="#c8603a"/>
<rect x="673.8" y="406.0" width="1" height="12.8" fill="#6a7a6a"/>
<rect x="673.0" y="410.8" width="2.6" height="6.3" fill="#c8603a"/>
<rect x="677.0" y="402.0" width="1" height="15.9" fill="#6a7a6a"/>
<rect x="676.2" y="404.4" width="2.6" height="11.7" fill="#4fa83a"/>
<rect x="680.2" y="401.8" width="1" height="15.5" fill="#6a7a6a"/>
<rect x="679.4" y="402.6" width="2.6" height="8.0" fill="#c8603a"/>
<rect x="683.4" y="410.3" width="1" height="1.7" fill="#6a7a6a"/>
<rect x="682.6" y="410.5" width="2.6" height="1.5" fill="#c8603a"/>
<rect x="686.6" y="408.9" width="1" height="10.5" fill="#6a7a6a"/>
<rect x="685.8" y="411.6" width="2.6" height="7.7" fill="#c8603a"/>
<rect x="689.8" y="410.5" width="1" height="13.2" fill="#6a7a6a"/>
<rect x="689.0" y="412.7" width="2.6" height="7.7" fill="#4fa83a"/>
<rect x="693.0" y="409.6" width="1" height="11.6" fill="#6a7a6a"/>
<rect x="692.2" y="413.3" width="2.6" height="7.8" fill="#c8603a"/>
<rect x="696.2" y="408.1" width="1" height="19.9" fill="#6a7a6a"/>
<rect x="695.4" y="410.1" width="2.6" height="12.1" fill="#4fa83a"/>
<rect x="699.4" y="410.0" width="1" height="19.6" fill="#6a7a6a"/>
<rect x="698.6" y="411.8" width="2.6" height="10.8" fill="#c8603a"/>
<rect x="702.6" y="422.3" width="1" height="6.8" fill="#6a7a6a"/>
<rect x="701.8" y="422.7" width="2.6" height="1.5" fill="#4fa83a"/>
<rect x="705.8" y="412.3" width="1" height="13.2" fill="#6a7a6a"/>
<rect x="705.0" y="419.2" width="2.6" height="5.4" fill="#4fa83a"/>
<rect x="709.0" y="415.8" width="1" height="5.7" fill="#6a7a6a"/>
<rect x="708.2" y="418.3" width="2.6" height="2.0" fill="#c8603a"/>
<rect x="712.2" y="418.2" width="1" height="9.0" fill="#6a7a6a"/>
<rect x="711.4" y="418.8" width="2.6" height="6.1" fill="#c8603a"/>
<rect x="715.4" y="411.7" width="1" height="18.6" fill="#6a7a6a"/>
<rect x="714.6" y="417.7" width="2.6" height="6.7" fill="#4fa83a"/>
<rect x="718.6" y="410.4" width="1" height="16.7" fill="#6a7a6a"/>
<rect x="717.8" y="415.7" width="2.6" height="4.8" fill="#c8603a"/>
<rect x="721.8" y="418.1" width="1" height="13.6" fill="#6a7a6a"/>
<rect x="721.0" y="419.1" width="2.6" height="6.5" fill="#c8603a"/>
<rect x="725.0" y="423.0" width="1" height="8.3" fill="#6a7a6a"/>
<rect x="724.2" y="423.7" width="2.6" height="5.6" fill="#c8603a"/>
<rect x="728.2" y="417.0" width="1" height="18.1" fill="#6a7a6a"/>
<rect x="727.4" y="418.8" width="2.6" height="11.5" fill="#4fa83a"/>
<rect x="731.4" y="409.4" width="1" height="13.7" fill="#6a7a6a"/>
<rect x="730.6" y="416.1" width="2.6" height="2.7" fill="#4fa83a"/>
<rect x="734.6" y="410.8" width="1" height="5.8" fill="#6a7a6a"/>
<rect x="733.8" y="414.5" width="2.6" height="1.5" fill="#c8603a"/>
<rect x="737.8" y="411.5" width="1" height="20.3" fill="#6a7a6a"/>
<rect x="737.0" y="414.8" width="2.6" height="10.4" fill="#c8603a"/>
<rect x="741.0" y="424.4" width="1" height="8.4" fill="#6a7a6a"/>
<rect x="740.2" y="425.4" width="2.6" height="4.3" fill="#c8603a"/>
<rect x="744.2" y="425.8" width="1" height="21.5" fill="#6a7a6a"/>
<rect x="743.4" y="428.3" width="2.6" height="14.7" fill="#c8603a"/>
<rect x="747.4" y="442.1" width="1" height="23.5" fill="#6a7a6a"/>
<rect x="746.6" y="444.1" width="2.6" height="18.8" fill="#c8603a"/>
<rect x="750.6" y="463.9" width="1" height="3.2" fill="#6a7a6a"/>
<rect x="749.8" y="464.1" width="2.6" height="1.5" fill="#c8603a"/>
<rect x="753.8" y="448.0" width="1" height="16.0" fill="#6a7a6a"/>
<rect x="753.0" y="449.6" width="2.6" height="14.4" fill="#4fa83a"/>
<rect x="757.0" y="445.6" width="1" height="13.7" fill="#6a7a6a"/>
<rect x="756.2" y="449.4" width="2.6" height="3.6" fill="#c8603a"/>
<rect x="760.2" y="448.8" width="1" height="12.6" fill="#6a7a6a"/>
<rect x="759.4" y="453.1" width="2.6" height="1.9" fill="#c8603a"/>
<rect x="763.4" y="455.6" width="1" height="9.0" fill="#6a7a6a"/>
<rect x="762.6" y="456.9" width="2.6" height="7.1" fill="#c8603a"/>
<rect x="766.6" y="460.1" width="1" height="9.0" fill="#6a7a6a"/>
<rect x="765.8" y="462.3" width="2.6" height="2.2" fill="#c8603a"/>
<rect x="769.8" y="453.3" width="1" height="12.1" fill="#6a7a6a"/>
<rect x="769.0" y="459.5" width="2.6" height="4.6" fill="#4fa83a"/>
<rect x="773.0" y="460.0" width="1" height="2.4" fill="#6a7a6a"/>
<rect x="772.2" y="460.5" width="2.6" height="1.5" fill="#4fa83a"/>
<rect x="776.2" y="457.9" width="1" height="5.1" fill="#6a7a6a"/>
<rect x="775.4" y="458.7" width="2.6" height="2.1" fill="#4fa83a"/>
<rect x="779.4" y="448.9" width="1" height="8.6" fill="#6a7a6a"/>
<rect x="778.6" y="450.4" width="2.6" height="6.6" fill="#4fa83a"/>
<rect x="782.6" y="448.3" width="1" height="17.6" fill="#6a7a6a"/>
<rect x="781.8" y="449.5" width="2.6" height="11.5" fill="#c8603a"/>
<rect x="785.8" y="450.4" width="1" height="13.3" fill="#6a7a6a"/>
<rect x="785.0" y="455.7" width="2.6" height="4.4" fill="#4fa83a"/>
<rect x="789.0" y="447.7" width="1" height="9.6" fill="#6a7a6a"/>
<rect x="788.2" y="448.6" width="2.6" height="7.6" fill="#4fa83a"/>
<rect x="792.2" y="442.4" width="1" height="12.5" fill="#6a7a6a"/>
<rect x="791.4" y="448.4" width="2.6" height="5.9" fill="#c8603a"/>
<rect x="795.4" y="438.3" width="1" height="17.3" fill="#6a7a6a"/>
<rect x="794.6" y="442.9" width="2.6" height="9.6" fill="#4fa83a"/>
<rect x="798.6" y="434.7" width="1" height="8.9" fill="#6a7a6a"/>
<rect x="797.8" y="440.0" width="2.6" height="1.5" fill="#4fa83a"/>
<rect x="801.8" y="434.9" width="1" height="16.5" fill="#6a7a6a"/>
<rect x="801.0" y="438.2" width="2.6" height="12.8" fill="#c8603a"/>
<rect x="805.0" y="443.6" width="1" height="8.7" fill="#6a7a6a"/>
<rect x="804.2" y="447.1" width="2.6" height="4.4" fill="#4fa83a"/>
<rect x="808.2" y="445.4" width="1" height="4.4" fill="#6a7a6a"/>
<rect x="807.4" y="445.5" width="2.6" height="1.5" fill="#c8603a"/>
<rect x="811.4" y="426.4" width="1" height="21.3" fill="#6a7a6a"/>
<rect x="810.6" y="428.8" width="2.6" height="15.2" fill="#4fa83a"/>
<rect x="814.6" y="423.8" width="1" height="9.6" fill="#6a7a6a"/>
<rect x="813.8" y="424.0" width="2.6" height="5.7" fill="#4fa83a"/>
<rect x="817.8" y="403.3" width="1" height="20.2" fill="#6a7a6a"/>
<rect x="817.0" y="408.0" width="2.6" height="14.4" fill="#4fa83a"/>
<rect x="821.0" y="384.2" width="1" height="24.5" fill="#6a7a6a"/>
<rect x="820.2" y="389.0" width="2.6" height="17.1" fill="#4fa83a"/>
<rect x="824.2" y="385.5" width="1" height="4.2" fill="#6a7a6a"/>
<rect x="823.4" y="386.0" width="2.6" height="2.8" fill="#4fa83a"/>
<rect x="827.4" y="372.4" width="1" height="15.6" fill="#6a7a6a"/>
<rect x="826.6" y="373.1" width="2.6" height="14.6" fill="#4fa83a"/>
<rect x="830.6" y="368.6" width="1" height="6.4" fill="#6a7a6a"/>
<rect x="829.8" y="370.7" width="2.6" height="1.5" fill="#4fa83a"/>
<rect x="833.8" y="369.0" width="1" height="7.1" fill="#6a7a6a"/>
<rect x="833.0" y="369.4" width="2.6" height="4.0" fill="#c8603a"/>
<rect x="837.0" y="370.0" width="1" height="9.4" fill="#6a7a6a"/>
<rect x="836.2" y="373.2" width="2.6" height="1.5" fill="#4fa83a"/>
<rect x="745.3" y="440.0" width="1" height="41.0" fill="#6a7a6a"/>
<rect x="744.5" y="447.0" width="2.6" height="31.0" fill="#c8603a"/>
<rect x="748.3" y="446.0" width="1" height="30.0" fill="#6a7a6a"/>
<rect x="747.5" y="452.0" width="2.6" height="18.0" fill="#c8603a"/>
<rect x="166.3" y="350.0" width="1" height="65.0" fill="#6a7a6a"/>
<rect x="165.5" y="372.0" width="2.6" height="20.0" fill="#c8603a"/>
<rect x="237.8" y="395.0" width="1" height="89.0" fill="#6a7a6a"/>
<rect x="237.0" y="452.0" width="2.6" height="18.0" fill="#c8603a"/>
<rect x="670.8" y="398.0" width="1" height="22.0" fill="#6a7a6a"/>
<rect x="670.0" y="408.0" width="2.6" height="4.0" fill="#c8603a"/>
<rect x="590.8" y="415.0" width="1" height="31.0" fill="#6a7a6a"/>
<rect x="590.0" y="430.0" width="2.6" height="10.0" fill="#c8603a"/>
<rect x="332.8" y="424.0" width="1" height="28.0" fill="#6a7a6a"/>
<rect x="332.0" y="436.0" width="2.6" height="10.0" fill="#c8603a"/>
<rect x="828.3" y="364.0" width="1" height="17.0" fill="#6a7a6a"/>
<rect x="827.5" y="368.0" width="2.6" height="10.0" fill="#4fa83a"/>
<rect x="831.8" y="360.0" width="1" height="18.0" fill="#6a7a6a"/>
<rect x="831.0" y="369.0" width="2.6" height="7.0" fill="#c8603a"/>
<rect x="835.3" y="358.0" width="1" height="21.0" fill="#6a7a6a"/>
<rect x="834.5" y="366.0" width="2.6" height="11.0" fill="#4fa83a"/>
<rect x="838.6" y="364.0" width="1" height="14.0" fill="#6a7a6a"/>
<rect x="837.8" y="367.0" width="2.6" height="9.0" fill="#4fa83a"/>
<rect x="818.8" y="396.0" width="1" height="28.0" fill="#6a7a6a"/>
<rect x="818.0" y="400.0" width="2.6" height="20.0" fill="#4fa83a"/>
<rect x="822.3" y="384.0" width="1" height="26.0" fill="#6a7a6a"/>
<rect x="821.5" y="388.0" width="2.6" height="17.0" fill="#4fa83a"/>
<rect x="825.3" y="374.0" width="1" height="22.0" fill="#6a7a6a"/>
<rect x="824.5" y="378.0" width="2.6" height="14.0" fill="#4fa83a"/>
<path d="M0.0 163.0 C9.7 165.3 41.3 172.6 58.0 177.0 C74.7 181.4 87.3 184.7 100.0 189.5 C112.7 194.3 124.0 200.5 134.0 205.6 C144.0 210.7 152.8 215.9 160.0 220.0 C167.2 224.1 170.3 226.0 177.0 230.2 C183.7 234.4 193.3 240.9 200.0 245.0 C206.7 249.1 211.3 251.1 217.0 254.5 C222.7 257.9 228.3 261.8 234.0 265.6 C239.7 269.4 245.3 273.8 251.0 277.5 C256.7 281.2 262.3 284.6 268.0 287.7 C273.7 290.8 279.7 293.5 285.0 296.2 C290.3 298.9 293.5 301.1 300.0 303.9 C306.5 306.7 317.2 310.2 324.0 313.0 C330.8 315.8 335.3 318.4 341.0 320.7 C346.7 323.0 352.3 324.5 358.0 326.6 C363.7 328.7 369.3 331.3 375.0 333.4 C380.7 335.5 386.3 337.5 392.0 339.4 C397.7 341.2 403.3 342.4 409.0 344.5 C414.7 346.6 419.2 349.3 426.0 352.2 C432.8 355.1 439.7 357.0 450.0 361.6 C460.3 366.2 478.0 374.7 487.7 380.0 C497.4 385.3 501.9 389.9 508.2 393.6 C514.5 397.3 518.2 398.9 525.2 402.2 C532.2 405.5 540.2 409.2 550.0 413.2 C559.8 417.2 572.6 422.2 584.0 426.0 C595.4 429.8 606.8 433.8 618.2 436.2 C629.6 438.6 638.7 439.9 652.3 440.5 C665.9 441.1 668.7 440.2 700.0 440.0 C731.3 439.8 816.7 439.6 840.0 439.5" fill="none" stroke="#b48e4c" stroke-width="2.1" stroke-linejoin="round" stroke-linecap="round"/>
<path d="M0.0 205.0 C5.7 205.7 22.7 208.0 34.0 209.0 C45.3 210.0 58.1 210.2 68.0 211.0 C77.9 211.8 86.6 213.0 93.6 214.0 C100.6 215.0 103.3 214.7 110.0 217.0 C116.7 219.3 125.7 224.2 134.0 227.7 C142.3 231.2 152.8 234.8 160.0 237.9 C167.2 241.0 170.3 242.4 177.0 246.4 C183.7 250.4 193.3 257.9 200.0 262.1 C206.7 266.3 211.3 268.1 217.0 271.5 C222.7 274.9 228.3 278.8 234.0 282.6 C239.7 286.4 245.3 290.5 251.0 294.5 C256.7 298.5 262.3 302.4 268.0 306.4 C273.7 310.4 279.7 314.6 285.0 318.4 C290.3 322.2 293.5 325.0 300.0 329.4 C306.5 333.8 317.2 340.6 324.0 344.5 C330.8 348.4 335.3 351.0 341.0 353.0 C346.7 355.0 352.3 355.5 358.0 356.5 C363.7 357.5 369.3 357.9 375.0 359.0 C380.7 360.1 386.3 361.7 392.0 363.3 C397.7 364.9 403.3 366.4 409.0 368.4 C414.7 370.4 419.2 372.8 426.0 375.2 C432.8 377.6 442.0 380.1 450.0 382.9 C458.0 385.7 464.3 387.9 474.0 392.0 C483.7 396.1 498.2 403.9 508.2 407.3 C518.1 410.7 526.7 411.4 533.7 412.4 C540.7 413.4 541.6 412.1 550.0 413.2 C558.4 414.3 572.6 417.6 584.0 419.2 C595.4 420.8 603.9 421.6 618.2 422.6 C632.5 423.6 651.4 425.4 670.0 425.2 C688.6 425.0 706.4 420.7 730.0 421.4 C753.6 422.1 793.5 427.9 811.8 429.5 C830.1 431.1 835.3 430.8 840.0 431.0" fill="none" stroke="#f6e45c" stroke-width="2.1" stroke-linejoin="round" stroke-linecap="round"/>
<path d="M0.0 202.8 C5.7 203.5 22.7 206.0 34.0 207.0 C45.3 208.0 58.1 207.8 68.0 208.7 C77.9 209.5 86.6 211.1 93.6 212.1 C100.6 213.1 103.3 212.7 110.0 214.7 C116.7 216.7 125.7 220.7 134.0 224.0 C142.3 227.3 152.8 231.5 160.0 234.5 C167.2 237.5 170.3 238.4 177.0 242.0 C183.7 245.6 193.3 252.3 200.0 256.2 C206.7 260.1 211.3 262.2 217.0 265.6 C222.7 269.0 228.3 272.8 234.0 276.6 C239.7 280.4 245.3 284.8 251.0 288.6 C256.7 292.4 262.3 296.1 268.0 299.6 C273.7 303.1 279.7 306.5 285.0 309.8 C290.3 313.1 293.5 315.6 300.0 319.2 C306.5 322.8 317.2 328.2 324.0 331.7 C330.8 335.2 335.3 338.2 341.0 340.3 C346.7 342.4 352.3 343.2 358.0 344.5 C363.7 345.8 369.3 346.6 375.0 347.9 C380.7 349.2 386.3 350.6 392.0 352.2 C397.7 353.8 403.3 355.4 409.0 357.3 C414.7 359.2 419.2 360.9 426.0 363.3 C432.8 365.7 442.0 369.0 450.0 371.8 C458.0 374.6 464.3 376.4 474.0 380.0 C483.7 383.6 498.2 390.1 508.2 393.6 C518.1 397.2 526.7 399.5 533.7 401.3 C540.7 403.1 541.6 403.1 550.0 404.7 C558.4 406.3 572.6 409.1 584.0 410.7 C595.4 412.2 603.9 413.0 618.2 414.0 C632.5 415.0 651.4 416.1 670.0 416.6 C688.6 417.2 706.4 415.8 730.0 417.3 C753.6 418.8 793.5 423.9 811.8 425.5 C830.1 427.1 835.3 426.8 840.0 427.0" fill="none" stroke="#f0ca2c" stroke-width="2.1" stroke-linejoin="round" stroke-linecap="round"/>
<path d="M0.0 224.0 C2.8 224.4 11.3 226.3 17.0 226.6 C22.7 226.9 27.8 226.5 34.0 225.8 C40.2 225.1 47.4 222.4 54.5 222.4 C61.6 222.4 70.1 224.8 76.6 225.8 C83.1 226.8 88.0 226.9 93.6 228.3 C99.2 229.7 103.3 231.9 110.0 234.3 C116.7 236.8 125.7 238.6 134.0 243.0 C142.3 247.4 152.8 255.8 160.0 260.9 C167.2 266.0 171.3 269.2 177.0 273.7 C182.7 278.2 190.2 284.6 194.0 288.1 C197.8 291.6 196.2 290.6 200.0 294.5 C203.8 298.4 211.3 305.8 217.0 311.5 C222.7 317.2 228.7 323.9 234.0 328.6 C239.3 333.4 241.5 334.5 248.7 340.0 C255.9 345.5 268.6 354.8 277.3 361.5 C286.0 368.2 293.2 375.4 301.1 380.5 C309.1 385.6 317.4 389.1 325.0 392.4 C332.6 395.7 337.7 398.6 347.0 400.2 C356.3 401.8 369.6 400.6 381.0 402.0 C392.4 403.4 405.4 406.7 415.2 408.7 C425.0 410.7 430.2 411.4 440.0 414.0 C449.8 416.6 465.5 420.9 474.0 424.3 C482.5 427.7 485.3 431.5 491.0 434.5 C496.7 437.5 502.5 440.2 508.2 442.2 C513.9 444.2 519.5 446.1 525.2 446.5 C530.9 446.9 536.5 445.4 542.3 444.8 C548.1 444.2 547.3 443.8 560.0 443.0 C572.7 442.2 600.4 442.0 618.7 439.8 C637.0 437.6 656.0 433.0 670.0 430.0 C684.0 427.0 693.0 422.5 703.0 422.0 C713.0 421.5 721.0 424.8 730.0 427.0 C739.0 429.2 748.0 432.7 757.0 435.0 C766.0 437.3 774.9 440.2 784.0 441.0 C793.1 441.8 802.4 446.0 811.8 440.0 C821.2 434.0 835.6 410.8 840.4 405.0" fill="none" stroke="#e8701e" stroke-width="2.2" stroke-linejoin="round" stroke-linecap="round"/>
<path d="M0.0 229.2 C1.7 229.5 4.5 231.1 10.2 230.9 C15.9 230.8 26.6 229.5 34.0 228.3 C41.4 227.2 47.4 224.1 54.5 224.0 C61.6 223.9 70.1 226.6 76.6 227.5 C83.1 228.4 88.0 227.8 93.6 229.2 C99.2 230.6 103.3 233.1 110.0 236.0 C116.7 238.9 125.7 241.8 134.0 246.5 C142.3 251.2 152.8 259.1 160.0 264.3 C167.2 269.5 170.3 272.0 177.0 277.9 C183.7 283.8 193.3 293.1 200.0 299.6 C206.7 306.1 211.3 311.0 217.0 316.7 C222.7 322.4 225.9 325.8 234.0 333.7 C242.1 341.6 256.2 356.0 265.4 363.8 C274.6 371.6 281.3 375.7 289.2 380.5 C297.1 385.3 303.9 388.0 313.0 392.4 C322.1 396.8 335.1 404.9 343.6 407.0 C352.1 409.1 356.3 405.6 364.0 405.3 C371.7 405.0 381.2 404.2 389.7 405.3 C398.2 406.4 406.8 409.8 415.2 412.0 C423.6 414.2 430.2 415.5 440.0 418.4 C449.8 421.3 465.5 426.1 474.0 429.4 C482.5 432.7 485.3 435.3 491.0 438.0 C496.7 440.7 502.5 443.6 508.2 445.6 C513.9 447.6 519.5 449.6 525.2 450.0 C530.9 450.4 532.5 448.5 542.3 448.2 C552.1 447.9 571.4 449.3 584.0 448.2 C596.6 447.1 603.9 444.3 618.2 441.4 C632.5 438.5 655.9 433.6 670.0 431.0 C684.1 428.4 693.0 426.2 703.0 426.0 C713.0 425.8 721.0 428.2 730.0 429.5 C739.0 430.8 748.2 432.2 757.3 433.6 C766.4 435.0 775.4 437.0 784.5 437.7 C793.6 438.4 802.5 439.5 811.8 437.7 C821.1 435.9 835.6 428.6 840.4 426.8" fill="none" stroke="#6a44ac" stroke-width="2.2" stroke-linejoin="round" stroke-linecap="round"/>
<path d="M0.0 246.2 C2.8 246.0 11.3 246.4 17.0 245.3 C22.7 244.2 28.3 241.5 34.0 239.4 C39.7 237.3 43.9 233.6 51.0 232.6 C58.1 231.6 69.5 233.4 76.6 233.4 C83.7 233.4 88.0 230.8 93.6 232.6 C99.2 234.4 103.4 239.9 110.0 244.5 C116.6 249.1 124.7 253.3 133.0 260.0 C141.3 266.7 153.8 278.9 160.0 284.7 C166.2 290.5 166.8 291.3 170.2 295.0 C173.6 298.7 177.3 302.9 180.4 306.9 C183.5 310.9 185.3 314.7 189.0 318.8 C192.7 322.9 199.1 327.7 202.5 331.6 C205.9 335.5 205.2 337.0 209.3 342.4 C213.4 347.8 221.8 356.6 227.2 363.8 C232.6 371.0 235.1 379.3 241.5 385.3 C247.9 391.3 257.4 394.8 265.4 399.6 C273.3 404.4 282.8 409.2 289.2 414.0 C295.6 418.8 298.7 425.2 303.5 428.2 C308.3 431.2 312.2 431.0 317.8 431.8 C323.4 432.6 331.3 433.6 336.9 433.0 C342.5 432.4 346.7 430.2 351.2 428.2 C355.7 426.1 359.0 422.8 364.0 420.7 C369.0 418.6 375.3 416.2 381.0 415.6 C386.7 415.0 392.3 415.9 398.0 417.3 C403.7 418.7 409.5 421.9 415.2 424.0 C420.9 426.1 425.3 428.0 432.3 430.0 C439.3 432.0 450.1 434.0 457.0 436.2 C463.9 438.4 468.3 440.4 474.0 443.0 C479.7 445.6 485.3 448.5 491.0 451.6 C496.7 454.7 503.1 459.1 508.2 461.8 C513.3 464.5 517.8 467.8 521.8 467.8 C525.8 467.8 528.6 463.4 532.0 461.8 C535.4 460.2 536.5 460.2 542.3 458.4 C548.1 456.5 558.3 451.7 567.0 450.7 C575.7 449.7 585.8 453.4 594.3 452.4 C602.8 451.4 610.0 447.2 618.2 444.8 C626.4 442.4 635.1 440.0 643.7 438.0 C652.3 436.0 660.1 435.1 670.0 432.8 C679.9 430.5 693.0 425.5 703.0 424.0 C713.0 422.5 721.0 421.9 730.0 424.0 C739.0 426.1 748.2 433.4 757.3 436.4 C766.4 439.4 775.4 441.1 784.5 441.8 C793.6 442.5 802.5 444.1 811.8 440.5 C821.1 436.9 835.6 423.4 840.4 420.0" fill="none" stroke="#30d43a" stroke-width="2.2" stroke-linejoin="round" stroke-linecap="round"/>
<path d="M0.0 253.0 C2.8 252.7 11.3 253.6 17.0 251.3 C22.7 249.0 27.8 244.1 34.0 239.4 C40.2 234.7 47.4 224.9 54.5 223.2 C61.6 221.5 70.1 227.9 76.6 229.2 C83.1 230.5 88.0 227.8 93.6 230.9 C99.2 234.0 105.8 243.1 110.0 247.9 C114.2 252.8 114.4 254.6 118.6 260.0 C122.8 265.4 129.6 273.2 135.0 280.4 C140.4 287.6 146.2 297.9 151.3 303.0 C156.4 308.1 161.0 304.8 165.7 311.0 C170.4 317.2 174.8 332.4 179.5 340.0 C184.2 347.6 187.4 348.0 193.8 356.7 C200.2 365.4 209.8 382.5 217.7 392.4 C225.6 402.3 234.3 410.7 241.5 416.3 C248.7 421.9 254.6 422.6 260.6 425.8 C266.6 429.0 271.4 432.2 277.3 435.4 C283.2 438.6 291.1 442.6 296.3 445.0 C301.5 447.4 303.5 448.9 308.3 449.7 C313.1 450.5 319.4 450.9 325.0 449.7 C330.6 448.5 336.1 445.7 341.6 442.5 C347.2 439.3 351.7 436.2 358.3 430.6 C364.9 425.0 374.4 411.8 381.0 408.7 C387.6 405.6 392.3 409.7 398.0 412.0 C403.7 414.3 409.5 418.7 415.2 422.4 C420.9 426.1 426.5 431.2 432.3 434.3 C438.1 437.4 441.7 437.1 450.0 441.0 C458.3 444.9 472.0 453.2 482.0 458.0 C492.0 462.8 503.0 467.3 510.0 470.0 C517.0 472.7 519.0 475.3 524.0 474.0 C529.0 472.7 534.0 466.0 540.0 462.0 C546.0 458.0 552.7 452.3 560.0 450.0 C567.3 447.7 574.3 449.5 584.0 448.0 C593.7 446.5 603.7 443.8 618.0 441.0 C632.3 438.2 655.8 434.2 670.0 431.0 C684.2 427.8 693.0 422.9 703.0 422.0 C713.0 421.1 721.0 422.7 730.0 425.5 C739.0 428.3 748.2 435.6 757.3 439.0 C766.4 442.4 775.4 445.4 784.5 445.9 C793.6 446.4 802.5 448.9 811.8 441.8 C821.1 434.8 835.6 410.0 840.4 403.6" fill="none" stroke="#a65e36" stroke-width="2.4" stroke-linejoin="round" stroke-linecap="round"/>
<path d="M0.0 256.4 C2.8 255.8 11.3 255.6 17.0 253.0 C22.7 250.4 27.8 246.2 34.0 241.0 C40.2 235.8 48.8 224.6 54.5 221.5 C60.2 218.4 63.0 221.1 68.1 222.4 C73.2 223.7 79.4 226.4 85.1 229.2 C90.8 232.0 98.0 234.6 102.2 239.4 C106.4 244.2 106.9 253.0 110.0 258.1 C113.1 263.2 115.5 263.9 120.7 270.0 C125.9 276.1 134.2 286.9 141.0 294.8 C147.8 302.7 156.0 309.8 161.6 317.3 C167.2 324.8 169.4 332.2 174.8 340.0 C180.2 347.8 186.7 354.3 193.8 363.8 C201.0 373.3 209.8 387.7 217.7 397.2 C225.6 406.7 233.6 415.0 241.5 421.0 C249.4 427.0 257.4 429.0 265.4 433.0 C273.3 437.0 282.0 441.6 289.2 445.0 C296.4 448.4 301.9 452.0 308.3 453.2 C314.7 454.4 321.8 453.0 327.3 452.0 C332.9 451.0 335.5 452.0 341.6 447.3 C347.7 442.6 357.4 431.6 364.0 424.0 C370.6 416.4 375.3 405.7 381.0 402.0 C386.7 398.3 393.7 400.9 398.0 402.0 C402.3 403.1 403.3 405.3 406.7 408.7 C410.1 412.1 414.3 417.8 418.6 422.4 C422.9 426.9 427.1 432.3 432.3 436.0 C437.5 439.7 441.7 439.7 450.0 444.5 C458.3 449.3 472.0 459.8 482.0 465.0 C492.0 470.2 503.0 473.8 510.0 476.0 C517.0 478.2 519.0 479.7 524.0 478.0 C529.0 476.3 535.7 470.1 540.0 466.0 C544.3 461.9 546.6 457.1 550.0 453.3 C553.4 449.5 556.8 445.4 560.2 443.0 C563.6 440.6 566.5 438.6 570.5 438.8 C574.5 439.0 579.5 442.4 584.0 444.0 C588.5 445.6 593.4 448.1 597.7 448.2 C602.0 448.3 604.9 446.5 609.7 444.8 C614.5 443.1 621.0 440.3 626.7 438.0 C632.4 435.7 636.5 433.1 643.7 431.0 C650.9 428.9 660.1 427.4 670.0 425.2 C679.9 423.0 693.0 419.1 703.0 418.0 C713.0 416.9 723.2 417.1 730.0 418.6 C736.8 420.1 739.1 422.9 743.6 426.8 C748.1 430.7 752.8 438.4 757.3 441.8 C761.8 445.2 764.1 445.9 770.9 447.3 C777.7 448.7 791.4 450.5 798.2 450.0 C805.0 449.5 807.3 448.1 811.8 444.5 C816.3 440.9 820.6 434.1 825.4 428.2 C830.2 422.3 837.9 412.2 840.4 409.0" fill="none" stroke="#f0a62a" stroke-width="2.6" stroke-linejoin="round" stroke-linecap="round"/>
<path d="M0.0 249.6 C2.8 249.0 12.8 249.0 17.0 246.2 C21.2 243.4 22.7 236.9 25.5 232.6 C28.3 228.3 29.8 222.7 34.0 220.6 C38.2 218.5 45.3 217.2 51.0 219.8 C56.7 222.4 62.4 233.9 68.1 236.0 C73.8 238.1 80.3 232.6 85.1 232.6 C89.9 232.6 93.6 232.6 97.0 236.0 C100.4 239.4 103.4 245.6 105.6 253.0 C107.8 260.4 106.2 272.4 110.4 280.4 C114.6 288.4 125.1 294.2 130.9 301.0 C136.7 307.8 140.1 317.9 145.2 321.3 C150.3 324.7 158.0 320.3 161.6 321.3 C165.2 322.3 165.3 322.8 166.7 327.5 C168.1 332.2 166.3 341.4 170.0 349.5 C173.7 357.6 183.0 367.4 189.0 375.8 C195.0 384.2 200.2 391.3 205.8 399.6 C211.4 407.9 217.2 419.5 222.4 425.8 C227.6 432.1 231.5 436.1 236.7 437.7 C241.9 439.3 247.0 434.6 253.4 435.4 C259.8 436.2 268.1 440.1 274.9 442.5 C281.7 444.9 287.6 448.5 294.0 449.7 C300.4 450.9 305.9 450.1 313.0 449.7 C320.1 449.3 330.4 454.4 336.9 447.3 C343.4 440.2 346.3 416.0 352.0 407.0 C357.7 398.0 366.2 394.8 371.0 393.4 C375.8 392.0 376.5 396.8 381.0 398.5 C385.5 400.2 392.9 399.4 398.0 403.6 C403.1 407.9 407.8 417.8 411.8 424.0 C415.8 430.2 419.1 436.7 422.0 441.0 C424.9 445.3 426.6 448.8 428.9 449.7 C431.2 450.6 432.2 447.6 435.7 446.2 C439.2 444.8 442.6 438.7 450.0 441.0 C457.4 443.3 470.0 453.8 480.0 460.0 C490.0 466.2 502.7 474.3 510.0 478.0 C517.3 481.7 519.0 485.8 524.0 482.0 C529.0 478.2 534.0 462.0 540.0 455.0 C546.0 448.0 550.0 442.5 560.0 440.0 C570.0 437.5 585.0 441.7 600.0 440.0 C615.0 438.3 632.8 433.3 650.0 430.0 C667.2 426.7 689.7 421.7 703.0 420.0 C716.3 418.3 723.2 416.8 730.0 420.0 C736.8 423.2 739.1 433.1 743.6 439.0 C748.1 444.9 752.8 453.1 757.3 455.4 C761.8 457.7 766.4 454.0 770.9 452.7 C775.4 451.4 778.6 448.2 784.5 447.3 C790.4 446.4 800.5 454.1 806.4 447.3 C812.3 440.5 816.4 415.9 820.0 406.4 C823.6 396.8 824.8 394.8 828.2 390.0 C831.6 385.2 838.4 379.8 840.4 377.7" fill="none" stroke="#bedc3a" stroke-width="2.1" stroke-linejoin="round" stroke-linecap="round"/>
<path d="M0.0 278.5 C1.7 278.6 7.4 279.8 10.2 279.4 C13.0 279.0 14.4 277.6 17.0 276.0 C19.6 274.4 22.1 271.9 25.5 270.0 C28.9 268.1 33.8 266.9 37.5 264.9 C41.2 262.9 44.9 260.7 47.7 258.1 C50.5 255.6 52.7 251.7 54.5 249.6 C56.3 247.5 57.0 245.5 58.7 245.3 C60.4 245.2 62.6 247.8 64.7 248.7 C66.8 249.5 68.7 250.0 71.5 250.4 C74.3 250.8 78.6 251.6 81.7 251.3 C84.8 251.0 88.1 249.5 90.2 248.7 C92.3 247.8 93.2 245.5 94.5 246.2 C95.8 246.9 96.6 249.6 97.9 253.0 C99.2 256.4 100.9 262.1 102.2 266.6 C103.5 271.1 104.2 275.9 105.6 280.2 C107.0 284.5 108.6 288.2 110.4 292.7 C112.2 297.2 114.2 303.2 116.6 307.0 C119.0 310.8 121.4 311.4 124.8 315.2 C128.2 318.9 133.2 325.4 137.0 329.5 C140.8 333.6 143.6 336.9 147.3 339.8 C151.1 342.7 156.6 346.0 159.5 347.0 C162.4 348.0 163.4 344.1 164.6 346.0 C165.8 347.9 165.8 352.4 166.7 358.2 C167.6 363.9 167.4 372.0 170.0 380.5 C172.6 389.0 178.0 402.2 182.0 409.0 C186.0 415.8 189.8 417.4 193.8 421.0 C197.8 424.6 203.0 430.2 205.8 430.6 C208.6 431.0 208.5 423.4 210.5 423.4 C212.5 423.4 214.9 427.0 217.7 430.6 C220.5 434.2 224.4 440.6 227.2 445.0 C230.0 449.4 232.0 454.4 234.4 456.8 C236.8 459.2 237.5 458.8 241.5 459.2 C245.5 459.6 252.6 458.8 258.2 459.2 C263.8 459.6 270.5 460.0 274.9 461.6 C279.3 463.2 281.2 466.3 284.4 468.7 C287.6 471.1 290.8 474.3 294.0 475.9 C297.2 477.5 298.3 478.1 303.5 478.3 C308.7 478.5 319.2 478.6 325.0 477.0 C330.8 475.4 335.1 469.3 338.5 468.4 C341.9 467.5 343.0 471.5 345.3 471.8 C347.6 472.1 349.6 469.1 352.2 470.1 C354.8 471.1 358.1 477.0 360.7 477.8 C363.2 478.6 365.2 477.9 367.5 475.2 C369.8 472.5 372.0 467.3 374.3 461.6 C376.6 455.9 378.8 446.5 381.1 441.1 C383.4 435.7 386.3 431.1 388.0 429.2 C389.7 427.3 390.0 430.4 391.4 430.0 C392.8 429.6 394.5 426.2 396.5 426.6 C398.5 427.0 401.0 430.5 403.3 432.6 C405.6 434.7 407.8 436.5 410.1 439.4 C412.4 442.2 415.0 445.7 417.0 449.7 C419.0 453.7 420.0 459.9 422.0 463.3 C424.0 466.7 426.1 468.7 428.9 470.1 C431.7 471.5 435.1 472.7 439.0 471.8 C442.9 470.9 448.7 465.5 452.3 465.0 C455.9 464.5 457.7 466.3 460.4 469.0 C463.1 471.7 465.2 477.9 468.6 481.3 C472.0 484.7 476.9 486.4 481.0 489.5 C485.1 492.6 488.9 497.6 493.0 499.8 C497.1 502.0 501.3 502.6 505.4 502.8 C509.5 503.0 514.6 502.0 517.7 500.8 C520.8 499.6 522.4 495.9 523.8 495.7 C525.2 495.5 524.9 497.4 525.9 499.8 C526.9 502.2 528.0 505.6 530.0 510.0 C532.0 514.4 535.1 524.9 538.2 526.3 C541.3 527.7 545.0 522.3 548.4 518.2 C551.8 514.1 555.8 508.2 558.6 501.8 C561.4 495.4 563.3 486.7 565.3 480.0 C567.3 473.3 568.2 464.1 570.5 461.8 C572.8 459.5 575.9 464.9 579.0 466.0 C582.1 467.1 586.4 468.6 589.2 468.6 C592.0 468.6 594.0 466.0 596.0 466.0 C598.0 466.0 599.0 467.6 601.0 468.6 C603.0 469.6 605.1 472.0 608.0 472.0 C610.9 472.0 614.8 470.6 618.2 468.6 C621.6 466.6 625.0 463.4 628.4 460.0 C631.8 456.6 635.2 450.7 638.6 448.2 C642.0 445.7 645.5 445.7 648.9 444.8 C652.3 443.9 655.4 444.2 659.0 443.0 C662.6 441.8 667.0 438.8 670.7 437.3 C674.4 435.8 676.6 435.2 681.0 434.2 C685.4 433.1 692.2 431.5 697.3 431.0 C702.4 430.5 706.8 431.0 711.6 431.0 C716.4 431.0 721.5 430.8 725.9 431.0 C730.3 431.2 735.2 430.5 738.2 432.0 C741.2 433.5 742.2 436.4 743.6 440.0 C745.0 443.6 744.9 449.2 746.3 453.6 C747.7 458.0 748.6 462.9 751.8 466.4 C755.0 469.9 761.6 473.1 765.5 474.5 C769.4 475.9 771.8 475.4 775.0 475.0 C778.2 474.6 781.1 474.2 784.5 471.8 C787.9 469.4 791.8 463.2 795.4 460.9 C799.0 458.6 803.7 458.9 806.4 458.2 C809.1 457.5 810.0 455.9 811.8 456.8 C813.6 457.7 815.5 460.2 817.3 463.6 C819.1 467.0 820.9 473.4 822.7 477.3 C824.5 481.2 826.4 485.0 828.2 486.8 C830.0 488.6 831.6 489.1 833.6 488.2 C835.6 487.3 839.3 482.5 840.4 481.4" fill="none" stroke="#ecbc2e" stroke-width="2.8" stroke-linejoin="round" stroke-linecap="round"/>
<path d="M0.0 230.9 C1.1 231.5 4.5 234.2 6.8 234.6 C9.1 235.0 11.3 234.6 13.6 233.4 C15.9 232.2 18.4 230.2 20.4 227.5 C22.4 224.8 23.5 220.8 25.5 217.2 C27.5 213.6 30.1 209.3 32.4 206.2 C34.7 203.1 36.7 200.5 39.2 198.5 C41.8 196.5 45.2 194.9 47.7 194.3 C50.2 193.7 52.5 194.6 54.5 195.1 C56.5 195.6 57.6 197.2 59.6 197.2 C61.6 197.2 64.4 195.0 66.4 195.1 C68.4 195.2 69.5 196.6 71.5 197.7 C73.5 198.8 76.0 200.5 78.3 201.9 C80.6 203.3 82.8 204.1 85.1 206.2 C87.4 208.3 90.0 212.5 92.0 214.7 C94.0 216.9 95.3 219.0 97.0 219.3 C98.7 219.6 100.5 219.0 102.2 216.4 C103.9 213.8 105.4 206.2 107.3 203.6 C109.2 200.9 111.4 200.2 113.6 200.5 C115.8 200.8 118.3 203.0 120.5 205.6 C122.7 208.2 124.2 209.3 127.0 215.8 C129.8 222.3 134.5 237.4 137.5 244.8 C140.5 252.2 142.9 255.8 145.2 260.0 C147.5 264.2 149.2 267.8 151.3 270.2 C153.4 272.6 155.2 271.6 157.5 274.3 C159.8 277.0 162.8 285.4 165.1 286.4 C167.3 287.4 168.4 279.6 171.0 280.5 C173.6 281.4 177.7 289.1 180.4 291.5 C183.1 293.9 185.0 293.0 187.3 295.0 C189.6 297.0 191.7 299.5 194.0 303.5 C196.3 307.5 199.2 315.1 200.9 318.8 C202.7 322.6 203.4 322.5 204.5 326.0 C205.6 329.5 206.5 335.3 207.5 340.0 C208.5 344.7 208.8 350.7 210.5 354.3 C212.2 357.9 214.1 358.3 217.7 361.5 C221.3 364.7 228.4 369.0 232.0 373.4 C235.6 377.8 236.6 382.9 239.0 387.7 C241.4 392.5 243.1 398.0 246.3 402.0 C249.5 406.0 254.2 409.1 258.2 411.5 C262.1 413.9 266.4 415.5 270.0 416.3 C273.6 417.1 276.9 416.7 279.7 416.3 C282.5 415.9 284.0 413.6 286.8 414.0 C289.6 414.4 293.5 415.9 296.3 418.7 C299.1 421.5 301.5 427.4 303.5 430.6 C305.5 433.8 305.9 436.5 308.3 437.7 C310.7 438.9 314.6 438.1 317.8 437.7 C321.0 437.3 323.7 436.4 327.3 435.4 C330.9 434.4 336.0 434.6 339.2 431.8 C342.4 429.0 344.0 424.5 346.4 418.7 C348.8 412.9 351.1 404.0 353.5 397.2 C355.9 390.4 358.3 383.4 360.7 378.0 C363.1 372.6 365.9 367.2 368.0 364.5 C370.1 361.8 371.8 362.2 373.5 362.0 C375.2 361.8 376.2 361.9 378.0 363.5 C379.8 365.1 382.0 369.8 384.0 371.5 C386.0 373.2 387.2 373.1 390.0 374.0 C392.8 374.9 397.6 375.4 400.5 376.7 C403.4 378.0 403.9 379.7 407.3 381.8 C410.7 383.9 416.8 386.3 421.0 389.3 C425.2 392.3 429.1 397.0 432.3 400.0 C435.5 403.0 437.6 404.4 440.0 407.3 C442.4 410.2 444.2 414.2 446.8 417.5 C449.4 420.8 452.7 425.9 455.3 426.9 C457.9 427.9 459.6 424.4 462.2 423.5 C464.8 422.6 467.6 421.7 470.7 421.8 C473.8 421.9 478.2 422.5 481.0 424.3 C483.8 426.1 485.4 429.4 487.7 432.8 C489.9 436.2 492.5 441.1 494.5 444.8 C496.5 448.5 497.4 452.9 499.7 455.0 C502.0 457.1 505.6 456.5 508.2 457.6 C510.8 458.7 513.0 459.7 515.0 461.8 C517.0 463.9 518.5 467.6 520.1 470.3 C521.7 473.0 523.0 480.0 524.4 478.0 C525.8 476.0 527.0 465.4 528.6 458.4 C530.2 451.4 532.0 443.6 533.7 436.2 C535.4 428.8 536.9 419.2 538.9 414.1 C540.9 409.0 543.0 408.5 545.7 405.6 C548.4 402.8 552.4 397.9 555.1 397.0 C557.8 396.1 560.0 398.5 562.0 400.5 C564.0 402.5 565.6 406.4 567.0 409.0 C568.4 411.6 569.1 414.7 570.5 415.8 C571.9 416.9 573.6 414.9 575.6 415.8 C577.6 416.7 580.4 419.3 582.4 421.0 C584.4 422.7 585.5 424.4 587.5 426.0 C589.5 427.6 592.4 428.6 594.3 430.3 C596.1 432.0 597.2 436.6 598.6 436.2 C600.0 435.8 600.9 430.1 602.8 427.7 C604.6 425.3 607.1 423.2 609.7 421.8 C612.3 420.4 615.7 420.6 618.2 419.2 C620.8 417.8 622.7 414.2 625.0 413.2 C627.3 412.2 629.5 412.8 631.8 413.2 C634.1 413.6 636.0 415.1 638.6 415.8 C641.2 416.5 644.4 417.6 647.2 417.5 C650.1 417.4 652.6 415.6 655.7 415.0 C658.8 414.4 663.4 414.7 665.9 414.0 C668.4 413.3 668.2 411.6 670.7 410.7 C673.2 409.8 677.6 409.0 681.0 408.6 C684.4 408.2 687.6 409.2 691.0 408.6 C694.4 408.0 697.9 405.8 701.3 405.0 C704.7 404.2 708.2 403.9 711.6 404.0 C715.0 404.1 718.7 405.0 721.8 405.6 C724.9 406.2 726.8 407.1 730.0 407.7 C733.2 408.3 737.9 410.4 740.9 409.0 C743.9 407.6 745.0 400.4 747.7 399.5 C750.4 398.6 753.4 401.6 757.3 403.6 C761.2 405.7 766.8 408.6 770.9 411.8 C775.0 415.0 779.1 419.3 781.8 422.7 C784.5 426.1 784.6 430.2 787.3 432.3 C790.0 434.4 794.1 434.1 798.2 435.0 C802.3 435.9 808.6 441.6 811.8 437.7 C815.0 433.8 815.5 420.7 817.3 411.8 C819.1 402.9 820.9 391.8 822.7 384.5 C824.5 377.2 826.4 373.0 828.2 368.2 C830.0 363.4 831.6 360.3 833.6 355.9 C835.6 351.4 839.3 343.9 840.4 341.5" fill="none" stroke="#1d5a9c" stroke-width="2.5" stroke-linejoin="round" stroke-linecap="round"/>
<rect x="0" y="215.8" width="989" height="1" fill="#b8662e"/>
<rect x="0" y="365" width="989" height="1" fill="#c8662e"/>
<rect x="0" y="453.5" width="989" height="3.6" fill="#dd5a12"/>
<rect x="0" y="474.7" width="989" height="1.1" fill="#000"/>
<path d="M143.0 374.0 L237.0 491.0 L380.5 411.3 L512.0 518.0 L703.5 417.3 L779.5 473.5 L882.0 369.0" fill="none" stroke="#4e30d2" stroke-width="1.2"/>
<path d="M882 367 L874.5 368.8 L884 376.8 Z" fill="#3d14e6"/>
<circle cx="143.0" cy="374.0" r="6.3" fill="#fff" stroke="#1a1a1a" stroke-width="1.3"/><circle cx="143.0" cy="374.0" r="3.9" fill="#151515"/>
<circle cx="237.0" cy="491.0" r="6.3" fill="#fff" stroke="#1a1a1a" stroke-width="1.3"/><circle cx="237.0" cy="491.0" r="3.9" fill="#151515"/>
<circle cx="380.5" cy="411.3" r="6.3" fill="#fff" stroke="#1a1a1a" stroke-width="1.3"/><circle cx="380.5" cy="411.3" r="3.9" fill="#151515"/>
<circle cx="512.0" cy="518.0" r="6.3" fill="#fff" stroke="#1a1a1a" stroke-width="1.3"/><circle cx="512.0" cy="518.0" r="3.9" fill="#151515"/>
<circle cx="703.5" cy="417.3" r="6.3" fill="#fff" stroke="#1a1a1a" stroke-width="1.3"/><circle cx="703.5" cy="417.3" r="3.9" fill="#151515"/>
<circle cx="779.5" cy="473.5" r="6.3" fill="#fff" stroke="#1a1a1a" stroke-width="1.3"/><circle cx="779.5" cy="473.5" r="3.9" fill="#151515"/>
<circle cx="886.3" cy="366.0" r="6.3" fill="#fff" stroke="#1a1a1a" stroke-width="1.3"/><circle cx="886.3" cy="366.0" r="3.9" fill="#151515"/>
</svg>
<div style="position:absolute;left:-2px;top:7px;font-size:11px;color:#70b450;white-space:pre;">22,631  L: 22,519  C: 22,631</div>
<div style="position:absolute;left:1px;top:215px;font-size:11px;color:#3a3a3a;white-space:pre;">30 Minuten)</div>
</div>
<div id="bot"></div>
<div id="botr">
 <svg width="453" height="40" style="position:absolute;left:0;top:0">
  <g fill="#e4e4e4">
   <rect x="13.3" y="0" width="1" height="40"/>
   <rect x="119.8" y="0" width="1" height="40"/>
   <rect x="225.8" y="0" width="1" height="40"/>
   <rect x="332.5" y="0" width="1" height="40"/>
   <rect x="439" y="30" width="1" height="10"/>
   <rect x="0" y="35" width="453" height="1"/>
  </g>
  <rect x="172.3" y="27" width="1.5" height="13" fill="#555"/>
  <rect x="405.7" y="28.3" width="12" height="12" fill="#6cc03c" stroke="#3d8a2a" stroke-width="1"/>
  <rect x="411.2" y="26.5" width="1" height="2" fill="#3d8a2a"/>
  <rect x="432.7" y="0" width="12.3" height="29.5" fill="#6cc03c" stroke="#3d8a2a" stroke-width="1"/>
 </svg>
</div>
<div id="botline"></div>
<div id="foot"></div>
</body></html>
